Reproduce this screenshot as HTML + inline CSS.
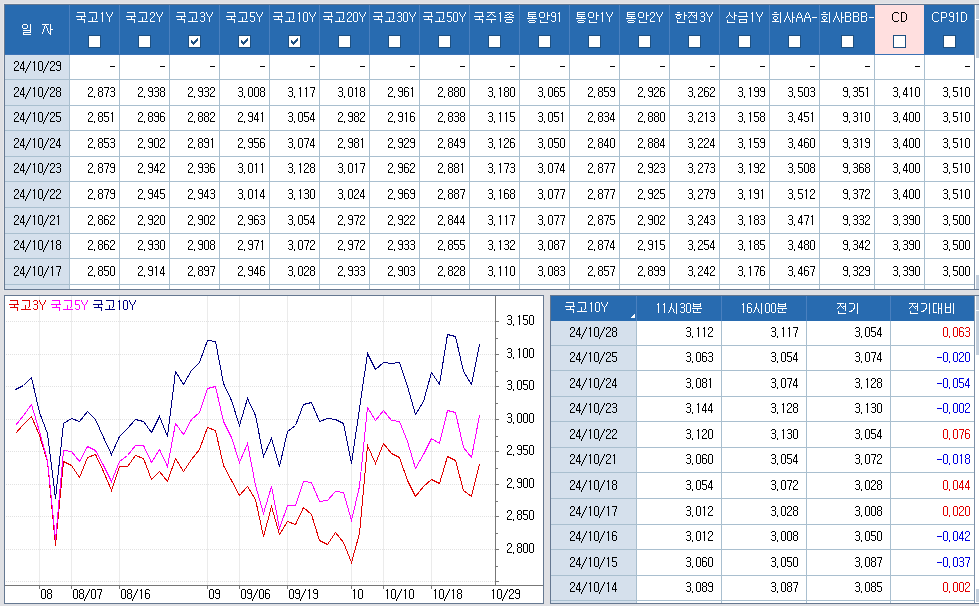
<!DOCTYPE html><html><head><meta charset="utf-8"><style>html,body{margin:0;padding:0;overflow:hidden;background:#dfe0e4}svg{display:block}</style></head><body><svg width="979" height="606" viewBox="0 0 979 606" shape-rendering="crispEdges"><defs><path id="g0030" d="M1 0h3v1h-3zM0 1h1v1h-1zM4 1h1v1h-1zM0 2h1v1h-1zM4 2h1v1h-1zM0 3h1v1h-1zM4 3h1v1h-1zM0 4h1v1h-1zM4 4h1v1h-1zM0 5h1v1h-1zM4 5h1v1h-1zM0 6h1v1h-1zM4 6h1v1h-1zM0 7h1v1h-1zM4 7h1v1h-1zM0 8h1v1h-1zM4 8h1v1h-1zM1 9h3v1h-3z"/>
<path id="g0031" d="M2 0h1v1h-1zM1 1h2v1h-2zM2 2h1v1h-1zM2 3h1v1h-1zM2 4h1v1h-1zM2 5h1v1h-1zM2 6h1v1h-1zM2 7h1v1h-1zM2 8h1v1h-1zM2 9h1v1h-1z"/>
<path id="g0032" d="M1 0h3v1h-3zM0 1h1v1h-1zM4 1h1v1h-1zM0 2h1v1h-1zM4 2h1v1h-1zM4 3h1v1h-1zM3 4h1v1h-1zM2 5h1v1h-1zM1 6h1v1h-1zM0 7h1v1h-1zM0 8h1v1h-1zM0 9h5v1h-5z"/>
<path id="g0033" d="M1 0h3v1h-3zM0 1h1v1h-1zM4 1h1v1h-1zM4 2h1v1h-1zM4 3h1v1h-1zM1 4h3v1h-3zM4 5h1v1h-1zM4 6h1v1h-1zM4 7h1v1h-1zM0 8h1v1h-1zM4 8h1v1h-1zM1 9h3v1h-3z"/>
<path id="g0034" d="M3 0h1v1h-1zM2 1h2v1h-2zM2 2h2v1h-2zM1 3h1v1h-1zM3 3h1v1h-1zM1 4h1v1h-1zM3 4h1v1h-1zM0 5h1v1h-1zM3 5h1v1h-1zM0 6h1v1h-1zM3 6h1v1h-1zM0 7h5v1h-5zM3 8h1v1h-1zM3 9h1v1h-1z"/>
<path id="g0035" d="M0 0h5v1h-5zM0 1h1v1h-1zM0 2h1v1h-1zM0 3h1v1h-1zM0 4h4v1h-4zM4 5h1v1h-1zM4 6h1v1h-1zM4 7h1v1h-1zM0 8h1v1h-1zM4 8h1v1h-1zM1 9h3v1h-3z"/>
<path id="g0036" d="M1 0h3v1h-3zM0 1h1v1h-1zM4 1h1v1h-1zM0 2h1v1h-1zM0 3h1v1h-1zM0 4h4v1h-4zM0 5h1v1h-1zM4 5h1v1h-1zM0 6h1v1h-1zM4 6h1v1h-1zM0 7h1v1h-1zM4 7h1v1h-1zM0 8h1v1h-1zM4 8h1v1h-1zM1 9h3v1h-3z"/>
<path id="g0037" d="M0 0h5v1h-5zM4 1h1v1h-1zM4 2h1v1h-1zM3 3h1v1h-1zM3 4h1v1h-1zM3 5h1v1h-1zM2 6h1v1h-1zM2 7h1v1h-1zM2 8h1v1h-1zM2 9h1v1h-1z"/>
<path id="g0038" d="M1 0h3v1h-3zM0 1h1v1h-1zM4 1h1v1h-1zM0 2h1v1h-1zM4 2h1v1h-1zM0 3h1v1h-1zM4 3h1v1h-1zM1 4h3v1h-3zM0 5h1v1h-1zM4 5h1v1h-1zM0 6h1v1h-1zM4 6h1v1h-1zM0 7h1v1h-1zM4 7h1v1h-1zM0 8h1v1h-1zM4 8h1v1h-1zM1 9h3v1h-3z"/>
<path id="g0039" d="M1 0h3v1h-3zM0 1h1v1h-1zM4 1h1v1h-1zM0 2h1v1h-1zM4 2h1v1h-1zM0 3h1v1h-1zM4 3h1v1h-1zM1 4h4v1h-4zM4 5h1v1h-1zM4 6h1v1h-1zM4 7h1v1h-1zM0 8h1v1h-1zM4 8h1v1h-1zM1 9h3v1h-3z"/>
<path id="g002c" d="M0 9h1v1h-1zM0 10h1v1h-1z"/>
<path id="g002d" d="M0 5h5v1h-5z"/>
<path id="g002f" d="M4 0h1v1h-1zM4 1h1v1h-1zM3 2h1v1h-1zM3 3h1v1h-1zM2 4h1v1h-1zM2 5h1v1h-1zM1 6h1v1h-1zM1 7h1v1h-1zM0 8h1v1h-1zM0 9h1v1h-1zM-1 10h1v1h-1zM-1 11h1v1h-1z"/>
<path id="g0043" d="M2 0h4v1h-4zM1 1h1v1h-1zM6 1h1v1h-1zM0 2h1v1h-1zM0 3h1v1h-1zM0 4h1v1h-1zM0 5h1v1h-1zM0 6h1v1h-1zM0 7h1v1h-1zM1 8h1v1h-1zM6 8h1v1h-1zM2 9h4v1h-4z"/>
<path id="g0050" d="M0 0h5v1h-5zM0 1h1v1h-1zM5 1h1v1h-1zM0 2h1v1h-1zM5 2h1v1h-1zM0 3h1v1h-1zM5 3h1v1h-1zM0 4h1v1h-1zM5 4h1v1h-1zM0 5h5v1h-5zM0 6h1v1h-1zM0 7h1v1h-1zM0 8h1v1h-1zM0 9h1v1h-1z"/>
<path id="g0044" d="M0 0h4v1h-4zM0 1h1v1h-1zM4 1h1v1h-1zM0 2h1v1h-1zM5 2h1v1h-1zM0 3h1v1h-1zM5 3h1v1h-1zM0 4h1v1h-1zM5 4h1v1h-1zM0 5h1v1h-1zM5 5h1v1h-1zM0 6h1v1h-1zM5 6h1v1h-1zM0 7h1v1h-1zM5 7h1v1h-1zM0 8h1v1h-1zM4 8h1v1h-1zM0 9h4v1h-4z"/>
<path id="g0059" d="M0 0h1v1h-1zM6 0h1v1h-1zM0 1h1v1h-1zM6 1h1v1h-1zM1 2h1v1h-1zM5 2h1v1h-1zM1 3h1v1h-1zM5 3h1v1h-1zM2 4h1v1h-1zM4 4h1v1h-1zM3 5h1v1h-1zM3 6h1v1h-1zM3 7h1v1h-1zM3 8h1v1h-1zM3 9h1v1h-1z"/>
<path id="g0041" d="M3 0h1v1h-1zM2 1h1v1h-1zM4 1h1v1h-1zM2 2h1v1h-1zM4 2h1v1h-1zM1 3h1v1h-1zM5 3h1v1h-1zM1 4h1v1h-1zM5 4h1v1h-1zM1 5h5v1h-5zM0 6h1v1h-1zM6 6h1v1h-1zM0 7h1v1h-1zM6 7h1v1h-1zM0 8h1v1h-1zM6 8h1v1h-1zM0 9h1v1h-1zM6 9h1v1h-1z"/>
<path id="g0042" d="M0 0h5v1h-5zM0 1h1v1h-1zM5 1h1v1h-1zM0 2h1v1h-1zM5 2h1v1h-1zM0 3h1v1h-1zM5 3h1v1h-1zM0 4h5v1h-5zM0 5h1v1h-1zM5 5h1v1h-1zM0 6h1v1h-1zM5 6h1v1h-1zM0 7h1v1h-1zM5 7h1v1h-1zM0 8h1v1h-1zM5 8h1v1h-1zM0 9h5v1h-5z"/>
<path id="gc77c" d="M1 0h4v1h-4zM8 0h1v1h-1zM0 1h1v1h-1zM5 1h1v1h-1zM8 1h1v1h-1zM0 2h1v1h-1zM5 2h1v1h-1zM8 2h1v1h-1zM0 3h1v1h-1zM5 3h1v1h-1zM8 3h1v1h-1zM1 4h4v1h-4zM8 4h1v1h-1zM8 5h1v1h-1zM1 6h8v1h-8zM8 7h1v1h-1zM1 8h8v1h-8zM1 9h1v1h-1zM1 10h8v1h-8z"/>
<path id="gc790" d="M0 0h7v1h-7zM8 0h1v1h-1zM3 1h1v1h-1zM8 1h1v1h-1zM2 2h1v1h-1zM4 2h1v1h-1zM8 2h1v1h-1zM2 3h1v1h-1zM4 3h1v1h-1zM8 3h1v1h-1zM2 4h1v1h-1zM5 4h1v1h-1zM8 4h1v1h-1zM1 5h1v1h-1zM5 5h1v1h-1zM8 5h3v1h-3zM1 6h1v1h-1zM5 6h1v1h-1zM8 6h1v1h-1zM1 7h1v1h-1zM6 7h1v1h-1zM8 7h1v1h-1zM0 8h1v1h-1zM6 8h1v1h-1zM8 8h1v1h-1zM0 9h1v1h-1zM7 9h2v1h-2zM8 10h1v1h-1z"/>
<path id="gad6d" d="M1 0h8v1h-8zM8 1h1v1h-1zM8 2h1v1h-1zM8 3h1v1h-1zM0 4h10v1h-10zM5 5h1v1h-1zM5 6h1v1h-1zM1 7h8v1h-8zM8 8h1v1h-1zM8 9h1v1h-1zM8 10h1v1h-1z"/>
<path id="gace0" d="M1 0h8v1h-8zM8 1h1v1h-1zM8 2h1v1h-1zM8 3h1v1h-1zM8 4h1v1h-1zM4 5h1v1h-1zM8 5h1v1h-1zM4 6h1v1h-1zM8 6h1v1h-1zM4 7h1v1h-1zM7 7h1v1h-1zM4 8h1v1h-1zM0 9h10v1h-10z"/>
<path id="gc8fc" d="M1 0h8v1h-8zM5 1h1v1h-1zM4 2h1v1h-1zM6 2h1v1h-1zM3 3h1v1h-1zM7 3h1v1h-1zM1 4h2v1h-2zM8 4h2v1h-2zM0 7h10v1h-10zM5 8h1v1h-1zM5 9h1v1h-1zM5 10h1v1h-1z"/>
<path id="gc885" d="M1 0h8v1h-8zM5 1h1v1h-1zM3 2h2v1h-2zM6 2h2v1h-2zM1 3h2v1h-2zM8 3h2v1h-2zM5 4h1v1h-1zM0 5h10v1h-10zM2 7h6v1h-6zM1 8h1v1h-1zM8 8h1v1h-1zM1 9h1v1h-1zM8 9h1v1h-1zM2 10h6v1h-6z"/>
<path id="gd1b5" d="M1 0h8v1h-8zM1 1h1v1h-1zM1 2h8v1h-8zM1 3h1v1h-1zM1 4h8v1h-8zM5 5h1v1h-1zM0 6h10v1h-10zM2 8h6v1h-6zM1 9h1v1h-1zM8 9h1v1h-1zM2 10h6v1h-6z"/>
<path id="gc548" d="M1 0h4v1h-4zM8 0h1v1h-1zM0 1h1v1h-1zM5 1h1v1h-1zM8 1h1v1h-1zM0 2h1v1h-1zM5 2h1v1h-1zM8 2h1v1h-1zM0 3h1v1h-1zM5 3h1v1h-1zM8 3h3v1h-3zM0 4h1v1h-1zM5 4h1v1h-1zM8 4h1v1h-1zM1 5h4v1h-4zM8 5h1v1h-1zM8 6h1v1h-1zM8 7h1v1h-1zM1 8h1v1h-1zM1 9h1v1h-1zM1 10h8v1h-8z"/>
<path id="gd55c" d="M1 0h3v1h-3zM8 0h1v1h-1zM8 1h1v1h-1zM-1 2h7v1h-7zM8 2h1v1h-1zM1 3h3v1h-3zM8 3h3v1h-3zM0 4h1v1h-1zM4 4h1v1h-1zM8 4h1v1h-1zM0 5h1v1h-1zM4 5h1v1h-1zM8 5h1v1h-1zM1 6h3v1h-3zM8 6h1v1h-1zM8 7h1v1h-1zM1 8h1v1h-1zM1 9h1v1h-1zM1 10h8v1h-8z"/>
<path id="gc804" d="M0 0h7v1h-7zM8 0h1v1h-1zM3 1h1v1h-1zM8 1h1v1h-1zM3 2h1v1h-1zM8 2h1v1h-1zM2 3h1v1h-1zM4 3h1v1h-1zM6 3h3v1h-3zM1 4h1v1h-1zM5 4h1v1h-1zM8 4h1v1h-1zM0 5h1v1h-1zM6 5h1v1h-1zM8 5h1v1h-1zM8 6h1v1h-1zM8 7h1v1h-1zM1 8h1v1h-1zM1 9h1v1h-1zM1 10h8v1h-8z"/>
<path id="gc0b0" d="M3 0h1v1h-1zM8 0h1v1h-1zM3 1h1v1h-1zM8 1h1v1h-1zM3 2h1v1h-1zM8 2h1v1h-1zM2 3h1v1h-1zM4 3h1v1h-1zM8 3h3v1h-3zM1 4h1v1h-1zM5 4h1v1h-1zM8 4h1v1h-1zM0 5h1v1h-1zM6 5h1v1h-1zM8 5h1v1h-1zM8 6h1v1h-1zM8 7h1v1h-1zM1 8h1v1h-1zM1 9h1v1h-1zM1 10h8v1h-8z"/>
<path id="gae08" d="M1 0h8v1h-8zM8 1h1v1h-1zM8 2h1v1h-1zM8 3h1v1h-1zM0 4h10v1h-10zM1 7h8v1h-8zM1 8h1v1h-1zM8 8h1v1h-1zM1 9h1v1h-1zM8 9h1v1h-1zM1 10h8v1h-8z"/>
<path id="gd68c" d="M2 0h3v1h-3zM8 0h1v1h-1zM8 1h1v1h-1zM0 2h7v1h-7zM8 2h1v1h-1zM8 3h1v1h-1zM2 4h3v1h-3zM8 4h1v1h-1zM1 5h1v1h-1zM5 5h1v1h-1zM8 5h1v1h-1zM1 6h1v1h-1zM5 6h1v1h-1zM8 6h1v1h-1zM2 7h3v1h-3zM8 7h1v1h-1zM3 8h1v1h-1zM8 8h1v1h-1zM0 9h7v1h-7zM8 9h1v1h-1zM8 10h1v1h-1z"/>
<path id="gc0ac" d="M3 0h1v1h-1zM8 0h1v1h-1zM3 1h1v1h-1zM8 1h1v1h-1zM3 2h1v1h-1zM8 2h1v1h-1zM3 3h1v1h-1zM8 3h1v1h-1zM2 4h1v1h-1zM4 4h1v1h-1zM8 4h1v1h-1zM2 5h1v1h-1zM4 5h1v1h-1zM8 5h3v1h-3zM1 6h1v1h-1zM5 6h1v1h-1zM8 6h1v1h-1zM1 7h1v1h-1zM5 7h1v1h-1zM8 7h1v1h-1zM0 8h1v1h-1zM6 8h1v1h-1zM8 8h1v1h-1zM0 9h1v1h-1zM6 9h1v1h-1zM8 9h1v1h-1zM8 10h1v1h-1z"/>
<path id="gc2dc" d="M3 0h1v1h-1zM8 0h1v1h-1zM3 1h1v1h-1zM8 1h1v1h-1zM3 2h1v1h-1zM8 2h1v1h-1zM3 3h1v1h-1zM8 3h1v1h-1zM2 4h2v1h-2zM8 4h1v1h-1zM2 5h1v1h-1zM4 5h1v1h-1zM8 5h1v1h-1zM2 6h1v1h-1zM5 6h1v1h-1zM8 6h1v1h-1zM1 7h1v1h-1zM5 7h1v1h-1zM8 7h1v1h-1zM1 8h1v1h-1zM5 8h1v1h-1zM8 8h1v1h-1zM0 9h1v1h-1zM6 9h1v1h-1zM8 9h1v1h-1zM8 10h1v1h-1z"/>
<path id="gbd84" d="M1 0h1v1h-1zM8 0h1v1h-1zM1 1h8v1h-8zM1 2h1v1h-1zM8 2h1v1h-1zM1 3h8v1h-8zM0 5h10v1h-10zM5 6h1v1h-1zM1 7h1v1h-1zM5 7h1v1h-1zM1 8h1v1h-1zM1 9h8v1h-8z"/>
<path id="gae30" d="M0 0h5v1h-5zM8 0h1v1h-1zM5 1h1v1h-1zM8 1h1v1h-1zM5 2h1v1h-1zM8 2h1v1h-1zM5 3h1v1h-1zM8 3h1v1h-1zM5 4h1v1h-1zM8 4h1v1h-1zM4 5h2v1h-2zM8 5h1v1h-1zM4 6h1v1h-1zM8 6h1v1h-1zM2 7h2v1h-2zM8 7h1v1h-1zM0 8h3v1h-3zM8 8h1v1h-1zM8 9h1v1h-1zM8 10h1v1h-1z"/>
<path id="gb300" d="M0 0h4v1h-4zM5 0h1v1h-1zM8 0h1v1h-1zM0 1h1v1h-1zM5 1h1v1h-1zM8 1h1v1h-1zM0 2h1v1h-1zM5 2h1v1h-1zM8 2h1v1h-1zM0 3h1v1h-1zM5 3h1v1h-1zM8 3h1v1h-1zM0 4h1v1h-1zM5 4h1v1h-1zM8 4h1v1h-1zM0 5h1v1h-1zM5 5h4v1h-4zM0 6h1v1h-1zM5 6h1v1h-1zM8 6h1v1h-1zM0 7h1v1h-1zM5 7h1v1h-1zM8 7h1v1h-1zM0 8h1v1h-1zM5 8h1v1h-1zM8 8h1v1h-1zM0 9h4v1h-4zM5 9h1v1h-1zM8 9h1v1h-1zM5 10h1v1h-1zM8 10h1v1h-1z"/>
<path id="gbe44" d="M0 0h1v1h-1zM5 0h1v1h-1zM8 0h1v1h-1zM0 1h1v1h-1zM5 1h1v1h-1zM8 1h1v1h-1zM0 2h1v1h-1zM5 2h1v1h-1zM8 2h1v1h-1zM0 3h1v1h-1zM5 3h1v1h-1zM8 3h1v1h-1zM0 4h6v1h-6zM8 4h1v1h-1zM0 5h1v1h-1zM5 5h1v1h-1zM8 5h1v1h-1zM0 6h1v1h-1zM5 6h1v1h-1zM8 6h1v1h-1zM0 7h1v1h-1zM5 7h1v1h-1zM8 7h1v1h-1zM0 8h1v1h-1zM5 8h1v1h-1zM8 8h1v1h-1zM0 9h6v1h-6zM8 9h1v1h-1zM8 10h1v1h-1z"/></defs><rect x="0" y="0" width="979" height="606" fill="#dfe0e4"/>
<rect x="3" y="3" width="976" height="1" fill="#e6e7ea"/>
<rect x="3" y="3" width="1" height="288" fill="#e6e7ea"/>
<rect x="4" y="4" width="975" height="286" fill="#657891"/>
<rect x="5" y="5" width="974" height="284" fill="#ffffff"/>
<rect x="5" y="5" width="970" height="50" fill="#286bb0"/>
<rect x="875" y="5" width="49" height="50" fill="#ffdfdf"/>
<rect x="5" y="55" width="64" height="234" fill="#d5e0ec"/>
<rect x="69" y="5" width="1" height="50" fill="#4a80bf"/>
<rect x="119" y="5" width="1" height="50" fill="#4a80bf"/>
<rect x="169" y="5" width="1" height="50" fill="#4a80bf"/>
<rect x="219" y="5" width="1" height="50" fill="#4a80bf"/>
<rect x="269" y="5" width="1" height="50" fill="#4a80bf"/>
<rect x="319" y="5" width="1" height="50" fill="#4a80bf"/>
<rect x="369" y="5" width="1" height="50" fill="#4a80bf"/>
<rect x="419" y="5" width="1" height="50" fill="#4a80bf"/>
<rect x="469" y="5" width="1" height="50" fill="#4a80bf"/>
<rect x="519" y="5" width="1" height="50" fill="#4a80bf"/>
<rect x="569" y="5" width="1" height="50" fill="#4a80bf"/>
<rect x="619" y="5" width="1" height="50" fill="#4a80bf"/>
<rect x="669" y="5" width="1" height="50" fill="#4a80bf"/>
<rect x="719" y="5" width="1" height="50" fill="#4a80bf"/>
<rect x="769" y="5" width="1" height="50" fill="#4a80bf"/>
<rect x="819" y="5" width="1" height="50" fill="#4a80bf"/>
<rect x="874" y="5" width="1" height="50" fill="#286bb0"/>
<rect x="924" y="5" width="1" height="50" fill="#286bb0"/>
<rect x="974" y="5" width="1" height="50" fill="#4a80bf"/>
<rect x="69" y="55" width="1" height="234" fill="#a9bfcf"/>
<rect x="119" y="55" width="1" height="234" fill="#a9bfcf"/>
<rect x="169" y="55" width="1" height="234" fill="#a9bfcf"/>
<rect x="219" y="55" width="1" height="234" fill="#a9bfcf"/>
<rect x="269" y="55" width="1" height="234" fill="#a9bfcf"/>
<rect x="319" y="55" width="1" height="234" fill="#a9bfcf"/>
<rect x="369" y="55" width="1" height="234" fill="#a9bfcf"/>
<rect x="419" y="55" width="1" height="234" fill="#a9bfcf"/>
<rect x="469" y="55" width="1" height="234" fill="#a9bfcf"/>
<rect x="519" y="55" width="1" height="234" fill="#a9bfcf"/>
<rect x="569" y="55" width="1" height="234" fill="#a9bfcf"/>
<rect x="619" y="55" width="1" height="234" fill="#a9bfcf"/>
<rect x="669" y="55" width="1" height="234" fill="#a9bfcf"/>
<rect x="719" y="55" width="1" height="234" fill="#a9bfcf"/>
<rect x="769" y="55" width="1" height="234" fill="#a9bfcf"/>
<rect x="819" y="55" width="1" height="234" fill="#a9bfcf"/>
<rect x="874" y="55" width="1" height="234" fill="#a9bfcf"/>
<rect x="924" y="55" width="1" height="234" fill="#a9bfcf"/>
<rect x="974" y="55" width="1" height="234" fill="#a9bfcf"/>
<rect x="5" y="79" width="970" height="1" fill="#a9bfcf"/>
<rect x="5" y="105" width="970" height="1" fill="#a9bfcf"/>
<rect x="5" y="130" width="970" height="1" fill="#a9bfcf"/>
<rect x="5" y="156" width="970" height="1" fill="#a9bfcf"/>
<rect x="5" y="181" width="970" height="1" fill="#a9bfcf"/>
<rect x="5" y="207" width="970" height="1" fill="#a9bfcf"/>
<rect x="5" y="233" width="970" height="1" fill="#a9bfcf"/>
<rect x="5" y="258" width="970" height="1" fill="#a9bfcf"/>
<rect x="5" y="284" width="970" height="1" fill="#a9bfcf"/>
<rect x="974" y="5" width="1" height="284" fill="#7d90a8"/>
<rect x="975" y="5" width="4" height="284" fill="#fff"/>
<rect x="976" y="5" width="3" height="14" fill="#c3cfdd"/>
<rect x="976" y="20" width="3" height="38" fill="#c3cfdd"/>
<rect x="976" y="275" width="3" height="14" fill="#c3cfdd"/>
<rect x="875" y="5" width="49" height="49" fill="#ffdfdf"/>
<rect x="5" y="54" width="969" height="1" fill="#3a72b6"/>
<g fill="#fff"><use href="#gc77c" x="22" y="24"/></g>
<g fill="#fff"><use href="#gc790" x="42" y="24"/></g>
<g fill="#fff"><use href="#gad6d" x="76" y="12"/><use href="#gace0" x="88" y="12"/><use href="#g0031" x="100" y="12"/><use href="#g0059" x="106" y="12"/></g>
<rect x="88" y="35" width="13" height="13" fill="#1d4f80"/>
<rect x="89" y="36" width="11" height="11" fill="#fff"/>
<g fill="#fff"><use href="#gad6d" x="126" y="12"/><use href="#gace0" x="138" y="12"/><use href="#g0032" x="150" y="12"/><use href="#g0059" x="156" y="12"/></g>
<rect x="138" y="35" width="13" height="13" fill="#1d4f80"/>
<rect x="139" y="36" width="11" height="11" fill="#fff"/>
<g fill="#fff"><use href="#gad6d" x="176" y="12"/><use href="#gace0" x="188" y="12"/><use href="#g0033" x="200" y="12"/><use href="#g0059" x="206" y="12"/></g>
<rect x="188" y="35" width="13" height="13" fill="#1d4f80"/>
<rect x="189" y="36" width="11" height="11" fill="#fff"/>
<path d="M197 38h1v1h-1zM196 39h2v1h-2zM191 40h1v1h-1zM195 40h3v1h-3zM191 41h2v1h-2zM194 41h3v1h-3zM191 42h5v1h-5zM192 43h3v1h-3zM193 44h1v1h-1z" fill="#1d4f80"/>
<g fill="#fff"><use href="#gad6d" x="226" y="12"/><use href="#gace0" x="238" y="12"/><use href="#g0035" x="250" y="12"/><use href="#g0059" x="256" y="12"/></g>
<rect x="238" y="35" width="13" height="13" fill="#1d4f80"/>
<rect x="239" y="36" width="11" height="11" fill="#fff"/>
<path d="M247 38h1v1h-1zM246 39h2v1h-2zM241 40h1v1h-1zM245 40h3v1h-3zM241 41h2v1h-2zM244 41h3v1h-3zM241 42h5v1h-5zM242 43h3v1h-3zM243 44h1v1h-1z" fill="#1d4f80"/>
<g fill="#fff"><use href="#gad6d" x="273" y="12"/><use href="#gace0" x="285" y="12"/><use href="#g0031" x="297" y="12"/><use href="#g0030" x="303" y="12"/><use href="#g0059" x="309" y="12"/></g>
<rect x="288" y="35" width="13" height="13" fill="#1d4f80"/>
<rect x="289" y="36" width="11" height="11" fill="#fff"/>
<path d="M297 38h1v1h-1zM296 39h2v1h-2zM291 40h1v1h-1zM295 40h3v1h-3zM291 41h2v1h-2zM294 41h3v1h-3zM291 42h5v1h-5zM292 43h3v1h-3zM293 44h1v1h-1z" fill="#1d4f80"/>
<g fill="#fff"><use href="#gad6d" x="323" y="12"/><use href="#gace0" x="335" y="12"/><use href="#g0032" x="347" y="12"/><use href="#g0030" x="353" y="12"/><use href="#g0059" x="359" y="12"/></g>
<rect x="338" y="35" width="13" height="13" fill="#1d4f80"/>
<rect x="339" y="36" width="11" height="11" fill="#fff"/>
<g fill="#fff"><use href="#gad6d" x="373" y="12"/><use href="#gace0" x="385" y="12"/><use href="#g0033" x="397" y="12"/><use href="#g0030" x="403" y="12"/><use href="#g0059" x="409" y="12"/></g>
<rect x="388" y="35" width="13" height="13" fill="#1d4f80"/>
<rect x="389" y="36" width="11" height="11" fill="#fff"/>
<g fill="#fff"><use href="#gad6d" x="423" y="12"/><use href="#gace0" x="435" y="12"/><use href="#g0035" x="447" y="12"/><use href="#g0030" x="453" y="12"/><use href="#g0059" x="459" y="12"/></g>
<rect x="438" y="35" width="13" height="13" fill="#1d4f80"/>
<rect x="439" y="36" width="11" height="11" fill="#fff"/>
<g fill="#fff"><use href="#gad6d" x="474" y="12"/><use href="#gc8fc" x="486" y="12"/><use href="#g0031" x="498" y="12"/><use href="#gc885" x="504" y="12"/></g>
<rect x="488" y="35" width="13" height="13" fill="#1d4f80"/>
<rect x="489" y="36" width="11" height="11" fill="#fff"/>
<g fill="#fff"><use href="#gd1b5" x="527" y="12"/><use href="#gc548" x="539" y="12"/><use href="#g0039" x="551" y="12"/><use href="#g0031" x="557" y="12"/></g>
<rect x="538" y="35" width="13" height="13" fill="#1d4f80"/>
<rect x="539" y="36" width="11" height="11" fill="#fff"/>
<g fill="#fff"><use href="#gd1b5" x="576" y="12"/><use href="#gc548" x="588" y="12"/><use href="#g0031" x="600" y="12"/><use href="#g0059" x="606" y="12"/></g>
<rect x="588" y="35" width="13" height="13" fill="#1d4f80"/>
<rect x="589" y="36" width="11" height="11" fill="#fff"/>
<g fill="#fff"><use href="#gd1b5" x="626" y="12"/><use href="#gc548" x="638" y="12"/><use href="#g0032" x="650" y="12"/><use href="#g0059" x="656" y="12"/></g>
<rect x="638" y="35" width="13" height="13" fill="#1d4f80"/>
<rect x="639" y="36" width="11" height="11" fill="#fff"/>
<g fill="#fff"><use href="#gd55c" x="676" y="12"/><use href="#gc804" x="688" y="12"/><use href="#g0033" x="700" y="12"/><use href="#g0059" x="706" y="12"/></g>
<rect x="688" y="35" width="13" height="13" fill="#1d4f80"/>
<rect x="689" y="36" width="11" height="11" fill="#fff"/>
<g fill="#fff"><use href="#gc0b0" x="726" y="12"/><use href="#gae08" x="738" y="12"/><use href="#g0031" x="750" y="12"/><use href="#g0059" x="756" y="12"/></g>
<rect x="738" y="35" width="13" height="13" fill="#1d4f80"/>
<rect x="739" y="36" width="11" height="11" fill="#fff"/>
<g fill="#fff"><use href="#gd68c" x="772" y="12"/><use href="#gc0ac" x="784" y="12"/><use href="#g0041" x="796" y="12"/><use href="#g0041" x="804" y="12"/><use href="#g002d" x="812" y="12"/></g>
<rect x="788" y="35" width="13" height="13" fill="#1d4f80"/>
<rect x="789" y="36" width="11" height="11" fill="#fff"/>
<g fill="#fff"><use href="#gd68c" x="821" y="12"/><use href="#gc0ac" x="833" y="12"/><use href="#g0042" x="845" y="12"/><use href="#g0042" x="853" y="12"/><use href="#g0042" x="861" y="12"/><use href="#g002d" x="869" y="12"/></g>
<rect x="841" y="35" width="13" height="13" fill="#1d4f80"/>
<rect x="842" y="36" width="11" height="11" fill="#fff"/>
<g fill="#000"><use href="#g0043" x="892" y="12"/><use href="#g0044" x="901" y="12"/></g>
<rect x="893" y="35" width="13" height="13" fill="#1d4f80"/>
<rect x="894" y="36" width="11" height="11" fill="#fff"/>
<g fill="#fff"><use href="#g0043" x="932" y="12"/><use href="#g0050" x="941" y="12"/><use href="#g0039" x="949" y="12"/><use href="#g0031" x="955" y="12"/><use href="#g0044" x="961" y="12"/></g>
<rect x="943" y="35" width="13" height="13" fill="#1d4f80"/>
<rect x="944" y="36" width="11" height="11" fill="#fff"/>
<g fill="#000"><use href="#g0032" x="14" y="61"/><use href="#g0034" x="20" y="61"/><use href="#g002f" x="26" y="61"/><use href="#g0031" x="32" y="61"/><use href="#g0030" x="38" y="61"/><use href="#g002f" x="44" y="61"/><use href="#g0032" x="50" y="61"/><use href="#g0039" x="56" y="61"/></g>
<g fill="#000"><use href="#g002d" x="110" y="61"/></g>
<g fill="#000"><use href="#g002d" x="160" y="61"/></g>
<g fill="#000"><use href="#g002d" x="210" y="61"/></g>
<g fill="#000"><use href="#g002d" x="260" y="61"/></g>
<g fill="#000"><use href="#g002d" x="310" y="61"/></g>
<g fill="#000"><use href="#g002d" x="360" y="61"/></g>
<g fill="#000"><use href="#g002d" x="410" y="61"/></g>
<g fill="#000"><use href="#g002d" x="460" y="61"/></g>
<g fill="#000"><use href="#g002d" x="510" y="61"/></g>
<g fill="#000"><use href="#g002d" x="560" y="61"/></g>
<g fill="#000"><use href="#g002d" x="610" y="61"/></g>
<g fill="#000"><use href="#g002d" x="660" y="61"/></g>
<g fill="#000"><use href="#g002d" x="710" y="61"/></g>
<g fill="#000"><use href="#g002d" x="760" y="61"/></g>
<g fill="#000"><use href="#g002d" x="810" y="61"/></g>
<g fill="#000"><use href="#g002d" x="865" y="61"/></g>
<g fill="#000"><use href="#g002d" x="915" y="61"/></g>
<g fill="#000"><use href="#g002d" x="965" y="61"/></g>
<g fill="#000"><use href="#g0032" x="14" y="87"/><use href="#g0034" x="20" y="87"/><use href="#g002f" x="26" y="87"/><use href="#g0031" x="32" y="87"/><use href="#g0030" x="38" y="87"/><use href="#g002f" x="44" y="87"/><use href="#g0032" x="50" y="87"/><use href="#g0038" x="56" y="87"/></g>
<g fill="#000"><use href="#g0032" x="88" y="87"/><use href="#g002c" x="94" y="87"/><use href="#g0038" x="98" y="87"/><use href="#g0037" x="104" y="87"/><use href="#g0033" x="110" y="87"/></g>
<g fill="#000"><use href="#g0032" x="138" y="87"/><use href="#g002c" x="144" y="87"/><use href="#g0039" x="148" y="87"/><use href="#g0033" x="154" y="87"/><use href="#g0038" x="160" y="87"/></g>
<g fill="#000"><use href="#g0032" x="188" y="87"/><use href="#g002c" x="194" y="87"/><use href="#g0039" x="198" y="87"/><use href="#g0033" x="204" y="87"/><use href="#g0032" x="210" y="87"/></g>
<g fill="#000"><use href="#g0033" x="238" y="87"/><use href="#g002c" x="244" y="87"/><use href="#g0030" x="248" y="87"/><use href="#g0030" x="254" y="87"/><use href="#g0038" x="260" y="87"/></g>
<g fill="#000"><use href="#g0033" x="288" y="87"/><use href="#g002c" x="294" y="87"/><use href="#g0031" x="298" y="87"/><use href="#g0031" x="304" y="87"/><use href="#g0037" x="310" y="87"/></g>
<g fill="#000"><use href="#g0033" x="338" y="87"/><use href="#g002c" x="344" y="87"/><use href="#g0030" x="348" y="87"/><use href="#g0031" x="354" y="87"/><use href="#g0038" x="360" y="87"/></g>
<g fill="#000"><use href="#g0032" x="388" y="87"/><use href="#g002c" x="394" y="87"/><use href="#g0039" x="398" y="87"/><use href="#g0036" x="404" y="87"/><use href="#g0031" x="410" y="87"/></g>
<g fill="#000"><use href="#g0032" x="438" y="87"/><use href="#g002c" x="444" y="87"/><use href="#g0038" x="448" y="87"/><use href="#g0038" x="454" y="87"/><use href="#g0030" x="460" y="87"/></g>
<g fill="#000"><use href="#g0033" x="488" y="87"/><use href="#g002c" x="494" y="87"/><use href="#g0031" x="498" y="87"/><use href="#g0038" x="504" y="87"/><use href="#g0030" x="510" y="87"/></g>
<g fill="#000"><use href="#g0033" x="538" y="87"/><use href="#g002c" x="544" y="87"/><use href="#g0030" x="548" y="87"/><use href="#g0036" x="554" y="87"/><use href="#g0035" x="560" y="87"/></g>
<g fill="#000"><use href="#g0032" x="588" y="87"/><use href="#g002c" x="594" y="87"/><use href="#g0038" x="598" y="87"/><use href="#g0035" x="604" y="87"/><use href="#g0039" x="610" y="87"/></g>
<g fill="#000"><use href="#g0032" x="638" y="87"/><use href="#g002c" x="644" y="87"/><use href="#g0039" x="648" y="87"/><use href="#g0032" x="654" y="87"/><use href="#g0036" x="660" y="87"/></g>
<g fill="#000"><use href="#g0033" x="688" y="87"/><use href="#g002c" x="694" y="87"/><use href="#g0032" x="698" y="87"/><use href="#g0036" x="704" y="87"/><use href="#g0032" x="710" y="87"/></g>
<g fill="#000"><use href="#g0033" x="738" y="87"/><use href="#g002c" x="744" y="87"/><use href="#g0031" x="748" y="87"/><use href="#g0039" x="754" y="87"/><use href="#g0039" x="760" y="87"/></g>
<g fill="#000"><use href="#g0033" x="788" y="87"/><use href="#g002c" x="794" y="87"/><use href="#g0035" x="798" y="87"/><use href="#g0030" x="804" y="87"/><use href="#g0033" x="810" y="87"/></g>
<g fill="#000"><use href="#g0039" x="843" y="87"/><use href="#g002c" x="849" y="87"/><use href="#g0033" x="853" y="87"/><use href="#g0035" x="859" y="87"/><use href="#g0031" x="865" y="87"/></g>
<g fill="#000"><use href="#g0033" x="893" y="87"/><use href="#g002c" x="899" y="87"/><use href="#g0034" x="903" y="87"/><use href="#g0031" x="909" y="87"/><use href="#g0030" x="915" y="87"/></g>
<g fill="#000"><use href="#g0033" x="943" y="87"/><use href="#g002c" x="949" y="87"/><use href="#g0035" x="953" y="87"/><use href="#g0031" x="959" y="87"/><use href="#g0030" x="965" y="87"/></g>
<g fill="#000"><use href="#g0032" x="14" y="112"/><use href="#g0034" x="20" y="112"/><use href="#g002f" x="26" y="112"/><use href="#g0031" x="32" y="112"/><use href="#g0030" x="38" y="112"/><use href="#g002f" x="44" y="112"/><use href="#g0032" x="50" y="112"/><use href="#g0035" x="56" y="112"/></g>
<g fill="#000"><use href="#g0032" x="88" y="112"/><use href="#g002c" x="94" y="112"/><use href="#g0038" x="98" y="112"/><use href="#g0035" x="104" y="112"/><use href="#g0031" x="110" y="112"/></g>
<g fill="#000"><use href="#g0032" x="138" y="112"/><use href="#g002c" x="144" y="112"/><use href="#g0038" x="148" y="112"/><use href="#g0039" x="154" y="112"/><use href="#g0036" x="160" y="112"/></g>
<g fill="#000"><use href="#g0032" x="188" y="112"/><use href="#g002c" x="194" y="112"/><use href="#g0038" x="198" y="112"/><use href="#g0038" x="204" y="112"/><use href="#g0032" x="210" y="112"/></g>
<g fill="#000"><use href="#g0032" x="238" y="112"/><use href="#g002c" x="244" y="112"/><use href="#g0039" x="248" y="112"/><use href="#g0034" x="254" y="112"/><use href="#g0031" x="260" y="112"/></g>
<g fill="#000"><use href="#g0033" x="288" y="112"/><use href="#g002c" x="294" y="112"/><use href="#g0030" x="298" y="112"/><use href="#g0035" x="304" y="112"/><use href="#g0034" x="310" y="112"/></g>
<g fill="#000"><use href="#g0032" x="338" y="112"/><use href="#g002c" x="344" y="112"/><use href="#g0039" x="348" y="112"/><use href="#g0038" x="354" y="112"/><use href="#g0032" x="360" y="112"/></g>
<g fill="#000"><use href="#g0032" x="388" y="112"/><use href="#g002c" x="394" y="112"/><use href="#g0039" x="398" y="112"/><use href="#g0031" x="404" y="112"/><use href="#g0036" x="410" y="112"/></g>
<g fill="#000"><use href="#g0032" x="438" y="112"/><use href="#g002c" x="444" y="112"/><use href="#g0038" x="448" y="112"/><use href="#g0033" x="454" y="112"/><use href="#g0038" x="460" y="112"/></g>
<g fill="#000"><use href="#g0033" x="488" y="112"/><use href="#g002c" x="494" y="112"/><use href="#g0031" x="498" y="112"/><use href="#g0031" x="504" y="112"/><use href="#g0035" x="510" y="112"/></g>
<g fill="#000"><use href="#g0033" x="538" y="112"/><use href="#g002c" x="544" y="112"/><use href="#g0030" x="548" y="112"/><use href="#g0035" x="554" y="112"/><use href="#g0031" x="560" y="112"/></g>
<g fill="#000"><use href="#g0032" x="588" y="112"/><use href="#g002c" x="594" y="112"/><use href="#g0038" x="598" y="112"/><use href="#g0033" x="604" y="112"/><use href="#g0034" x="610" y="112"/></g>
<g fill="#000"><use href="#g0032" x="638" y="112"/><use href="#g002c" x="644" y="112"/><use href="#g0038" x="648" y="112"/><use href="#g0038" x="654" y="112"/><use href="#g0030" x="660" y="112"/></g>
<g fill="#000"><use href="#g0033" x="688" y="112"/><use href="#g002c" x="694" y="112"/><use href="#g0032" x="698" y="112"/><use href="#g0031" x="704" y="112"/><use href="#g0033" x="710" y="112"/></g>
<g fill="#000"><use href="#g0033" x="738" y="112"/><use href="#g002c" x="744" y="112"/><use href="#g0031" x="748" y="112"/><use href="#g0035" x="754" y="112"/><use href="#g0038" x="760" y="112"/></g>
<g fill="#000"><use href="#g0033" x="788" y="112"/><use href="#g002c" x="794" y="112"/><use href="#g0034" x="798" y="112"/><use href="#g0035" x="804" y="112"/><use href="#g0031" x="810" y="112"/></g>
<g fill="#000"><use href="#g0039" x="843" y="112"/><use href="#g002c" x="849" y="112"/><use href="#g0033" x="853" y="112"/><use href="#g0031" x="859" y="112"/><use href="#g0030" x="865" y="112"/></g>
<g fill="#000"><use href="#g0033" x="893" y="112"/><use href="#g002c" x="899" y="112"/><use href="#g0034" x="903" y="112"/><use href="#g0030" x="909" y="112"/><use href="#g0030" x="915" y="112"/></g>
<g fill="#000"><use href="#g0033" x="943" y="112"/><use href="#g002c" x="949" y="112"/><use href="#g0035" x="953" y="112"/><use href="#g0031" x="959" y="112"/><use href="#g0030" x="965" y="112"/></g>
<g fill="#000"><use href="#g0032" x="14" y="138"/><use href="#g0034" x="20" y="138"/><use href="#g002f" x="26" y="138"/><use href="#g0031" x="32" y="138"/><use href="#g0030" x="38" y="138"/><use href="#g002f" x="44" y="138"/><use href="#g0032" x="50" y="138"/><use href="#g0034" x="56" y="138"/></g>
<g fill="#000"><use href="#g0032" x="88" y="138"/><use href="#g002c" x="94" y="138"/><use href="#g0038" x="98" y="138"/><use href="#g0035" x="104" y="138"/><use href="#g0033" x="110" y="138"/></g>
<g fill="#000"><use href="#g0032" x="138" y="138"/><use href="#g002c" x="144" y="138"/><use href="#g0039" x="148" y="138"/><use href="#g0030" x="154" y="138"/><use href="#g0032" x="160" y="138"/></g>
<g fill="#000"><use href="#g0032" x="188" y="138"/><use href="#g002c" x="194" y="138"/><use href="#g0038" x="198" y="138"/><use href="#g0039" x="204" y="138"/><use href="#g0031" x="210" y="138"/></g>
<g fill="#000"><use href="#g0032" x="238" y="138"/><use href="#g002c" x="244" y="138"/><use href="#g0039" x="248" y="138"/><use href="#g0035" x="254" y="138"/><use href="#g0036" x="260" y="138"/></g>
<g fill="#000"><use href="#g0033" x="288" y="138"/><use href="#g002c" x="294" y="138"/><use href="#g0030" x="298" y="138"/><use href="#g0037" x="304" y="138"/><use href="#g0034" x="310" y="138"/></g>
<g fill="#000"><use href="#g0032" x="338" y="138"/><use href="#g002c" x="344" y="138"/><use href="#g0039" x="348" y="138"/><use href="#g0038" x="354" y="138"/><use href="#g0031" x="360" y="138"/></g>
<g fill="#000"><use href="#g0032" x="388" y="138"/><use href="#g002c" x="394" y="138"/><use href="#g0039" x="398" y="138"/><use href="#g0032" x="404" y="138"/><use href="#g0039" x="410" y="138"/></g>
<g fill="#000"><use href="#g0032" x="438" y="138"/><use href="#g002c" x="444" y="138"/><use href="#g0038" x="448" y="138"/><use href="#g0034" x="454" y="138"/><use href="#g0039" x="460" y="138"/></g>
<g fill="#000"><use href="#g0033" x="488" y="138"/><use href="#g002c" x="494" y="138"/><use href="#g0031" x="498" y="138"/><use href="#g0032" x="504" y="138"/><use href="#g0036" x="510" y="138"/></g>
<g fill="#000"><use href="#g0033" x="538" y="138"/><use href="#g002c" x="544" y="138"/><use href="#g0030" x="548" y="138"/><use href="#g0035" x="554" y="138"/><use href="#g0030" x="560" y="138"/></g>
<g fill="#000"><use href="#g0032" x="588" y="138"/><use href="#g002c" x="594" y="138"/><use href="#g0038" x="598" y="138"/><use href="#g0034" x="604" y="138"/><use href="#g0030" x="610" y="138"/></g>
<g fill="#000"><use href="#g0032" x="638" y="138"/><use href="#g002c" x="644" y="138"/><use href="#g0038" x="648" y="138"/><use href="#g0038" x="654" y="138"/><use href="#g0034" x="660" y="138"/></g>
<g fill="#000"><use href="#g0033" x="688" y="138"/><use href="#g002c" x="694" y="138"/><use href="#g0032" x="698" y="138"/><use href="#g0032" x="704" y="138"/><use href="#g0034" x="710" y="138"/></g>
<g fill="#000"><use href="#g0033" x="738" y="138"/><use href="#g002c" x="744" y="138"/><use href="#g0031" x="748" y="138"/><use href="#g0035" x="754" y="138"/><use href="#g0039" x="760" y="138"/></g>
<g fill="#000"><use href="#g0033" x="788" y="138"/><use href="#g002c" x="794" y="138"/><use href="#g0034" x="798" y="138"/><use href="#g0036" x="804" y="138"/><use href="#g0030" x="810" y="138"/></g>
<g fill="#000"><use href="#g0039" x="843" y="138"/><use href="#g002c" x="849" y="138"/><use href="#g0033" x="853" y="138"/><use href="#g0031" x="859" y="138"/><use href="#g0039" x="865" y="138"/></g>
<g fill="#000"><use href="#g0033" x="893" y="138"/><use href="#g002c" x="899" y="138"/><use href="#g0034" x="903" y="138"/><use href="#g0030" x="909" y="138"/><use href="#g0030" x="915" y="138"/></g>
<g fill="#000"><use href="#g0033" x="943" y="138"/><use href="#g002c" x="949" y="138"/><use href="#g0035" x="953" y="138"/><use href="#g0031" x="959" y="138"/><use href="#g0030" x="965" y="138"/></g>
<g fill="#000"><use href="#g0032" x="14" y="163"/><use href="#g0034" x="20" y="163"/><use href="#g002f" x="26" y="163"/><use href="#g0031" x="32" y="163"/><use href="#g0030" x="38" y="163"/><use href="#g002f" x="44" y="163"/><use href="#g0032" x="50" y="163"/><use href="#g0033" x="56" y="163"/></g>
<g fill="#000"><use href="#g0032" x="88" y="163"/><use href="#g002c" x="94" y="163"/><use href="#g0038" x="98" y="163"/><use href="#g0037" x="104" y="163"/><use href="#g0039" x="110" y="163"/></g>
<g fill="#000"><use href="#g0032" x="138" y="163"/><use href="#g002c" x="144" y="163"/><use href="#g0039" x="148" y="163"/><use href="#g0034" x="154" y="163"/><use href="#g0032" x="160" y="163"/></g>
<g fill="#000"><use href="#g0032" x="188" y="163"/><use href="#g002c" x="194" y="163"/><use href="#g0039" x="198" y="163"/><use href="#g0033" x="204" y="163"/><use href="#g0036" x="210" y="163"/></g>
<g fill="#000"><use href="#g0033" x="238" y="163"/><use href="#g002c" x="244" y="163"/><use href="#g0030" x="248" y="163"/><use href="#g0031" x="254" y="163"/><use href="#g0031" x="260" y="163"/></g>
<g fill="#000"><use href="#g0033" x="288" y="163"/><use href="#g002c" x="294" y="163"/><use href="#g0031" x="298" y="163"/><use href="#g0032" x="304" y="163"/><use href="#g0038" x="310" y="163"/></g>
<g fill="#000"><use href="#g0033" x="338" y="163"/><use href="#g002c" x="344" y="163"/><use href="#g0030" x="348" y="163"/><use href="#g0031" x="354" y="163"/><use href="#g0037" x="360" y="163"/></g>
<g fill="#000"><use href="#g0032" x="388" y="163"/><use href="#g002c" x="394" y="163"/><use href="#g0039" x="398" y="163"/><use href="#g0036" x="404" y="163"/><use href="#g0032" x="410" y="163"/></g>
<g fill="#000"><use href="#g0032" x="438" y="163"/><use href="#g002c" x="444" y="163"/><use href="#g0038" x="448" y="163"/><use href="#g0038" x="454" y="163"/><use href="#g0031" x="460" y="163"/></g>
<g fill="#000"><use href="#g0033" x="488" y="163"/><use href="#g002c" x="494" y="163"/><use href="#g0031" x="498" y="163"/><use href="#g0037" x="504" y="163"/><use href="#g0033" x="510" y="163"/></g>
<g fill="#000"><use href="#g0033" x="538" y="163"/><use href="#g002c" x="544" y="163"/><use href="#g0030" x="548" y="163"/><use href="#g0037" x="554" y="163"/><use href="#g0034" x="560" y="163"/></g>
<g fill="#000"><use href="#g0032" x="588" y="163"/><use href="#g002c" x="594" y="163"/><use href="#g0038" x="598" y="163"/><use href="#g0037" x="604" y="163"/><use href="#g0037" x="610" y="163"/></g>
<g fill="#000"><use href="#g0032" x="638" y="163"/><use href="#g002c" x="644" y="163"/><use href="#g0039" x="648" y="163"/><use href="#g0032" x="654" y="163"/><use href="#g0033" x="660" y="163"/></g>
<g fill="#000"><use href="#g0033" x="688" y="163"/><use href="#g002c" x="694" y="163"/><use href="#g0032" x="698" y="163"/><use href="#g0037" x="704" y="163"/><use href="#g0033" x="710" y="163"/></g>
<g fill="#000"><use href="#g0033" x="738" y="163"/><use href="#g002c" x="744" y="163"/><use href="#g0031" x="748" y="163"/><use href="#g0039" x="754" y="163"/><use href="#g0032" x="760" y="163"/></g>
<g fill="#000"><use href="#g0033" x="788" y="163"/><use href="#g002c" x="794" y="163"/><use href="#g0035" x="798" y="163"/><use href="#g0030" x="804" y="163"/><use href="#g0038" x="810" y="163"/></g>
<g fill="#000"><use href="#g0039" x="843" y="163"/><use href="#g002c" x="849" y="163"/><use href="#g0033" x="853" y="163"/><use href="#g0036" x="859" y="163"/><use href="#g0038" x="865" y="163"/></g>
<g fill="#000"><use href="#g0033" x="893" y="163"/><use href="#g002c" x="899" y="163"/><use href="#g0034" x="903" y="163"/><use href="#g0030" x="909" y="163"/><use href="#g0030" x="915" y="163"/></g>
<g fill="#000"><use href="#g0033" x="943" y="163"/><use href="#g002c" x="949" y="163"/><use href="#g0035" x="953" y="163"/><use href="#g0031" x="959" y="163"/><use href="#g0030" x="965" y="163"/></g>
<g fill="#000"><use href="#g0032" x="14" y="189"/><use href="#g0034" x="20" y="189"/><use href="#g002f" x="26" y="189"/><use href="#g0031" x="32" y="189"/><use href="#g0030" x="38" y="189"/><use href="#g002f" x="44" y="189"/><use href="#g0032" x="50" y="189"/><use href="#g0032" x="56" y="189"/></g>
<g fill="#000"><use href="#g0032" x="88" y="189"/><use href="#g002c" x="94" y="189"/><use href="#g0038" x="98" y="189"/><use href="#g0037" x="104" y="189"/><use href="#g0039" x="110" y="189"/></g>
<g fill="#000"><use href="#g0032" x="138" y="189"/><use href="#g002c" x="144" y="189"/><use href="#g0039" x="148" y="189"/><use href="#g0034" x="154" y="189"/><use href="#g0035" x="160" y="189"/></g>
<g fill="#000"><use href="#g0032" x="188" y="189"/><use href="#g002c" x="194" y="189"/><use href="#g0039" x="198" y="189"/><use href="#g0034" x="204" y="189"/><use href="#g0033" x="210" y="189"/></g>
<g fill="#000"><use href="#g0033" x="238" y="189"/><use href="#g002c" x="244" y="189"/><use href="#g0030" x="248" y="189"/><use href="#g0031" x="254" y="189"/><use href="#g0034" x="260" y="189"/></g>
<g fill="#000"><use href="#g0033" x="288" y="189"/><use href="#g002c" x="294" y="189"/><use href="#g0031" x="298" y="189"/><use href="#g0033" x="304" y="189"/><use href="#g0030" x="310" y="189"/></g>
<g fill="#000"><use href="#g0033" x="338" y="189"/><use href="#g002c" x="344" y="189"/><use href="#g0030" x="348" y="189"/><use href="#g0032" x="354" y="189"/><use href="#g0034" x="360" y="189"/></g>
<g fill="#000"><use href="#g0032" x="388" y="189"/><use href="#g002c" x="394" y="189"/><use href="#g0039" x="398" y="189"/><use href="#g0036" x="404" y="189"/><use href="#g0039" x="410" y="189"/></g>
<g fill="#000"><use href="#g0032" x="438" y="189"/><use href="#g002c" x="444" y="189"/><use href="#g0038" x="448" y="189"/><use href="#g0038" x="454" y="189"/><use href="#g0037" x="460" y="189"/></g>
<g fill="#000"><use href="#g0033" x="488" y="189"/><use href="#g002c" x="494" y="189"/><use href="#g0031" x="498" y="189"/><use href="#g0036" x="504" y="189"/><use href="#g0038" x="510" y="189"/></g>
<g fill="#000"><use href="#g0033" x="538" y="189"/><use href="#g002c" x="544" y="189"/><use href="#g0030" x="548" y="189"/><use href="#g0037" x="554" y="189"/><use href="#g0037" x="560" y="189"/></g>
<g fill="#000"><use href="#g0032" x="588" y="189"/><use href="#g002c" x="594" y="189"/><use href="#g0038" x="598" y="189"/><use href="#g0037" x="604" y="189"/><use href="#g0037" x="610" y="189"/></g>
<g fill="#000"><use href="#g0032" x="638" y="189"/><use href="#g002c" x="644" y="189"/><use href="#g0039" x="648" y="189"/><use href="#g0032" x="654" y="189"/><use href="#g0035" x="660" y="189"/></g>
<g fill="#000"><use href="#g0033" x="688" y="189"/><use href="#g002c" x="694" y="189"/><use href="#g0032" x="698" y="189"/><use href="#g0037" x="704" y="189"/><use href="#g0039" x="710" y="189"/></g>
<g fill="#000"><use href="#g0033" x="738" y="189"/><use href="#g002c" x="744" y="189"/><use href="#g0031" x="748" y="189"/><use href="#g0039" x="754" y="189"/><use href="#g0031" x="760" y="189"/></g>
<g fill="#000"><use href="#g0033" x="788" y="189"/><use href="#g002c" x="794" y="189"/><use href="#g0035" x="798" y="189"/><use href="#g0031" x="804" y="189"/><use href="#g0032" x="810" y="189"/></g>
<g fill="#000"><use href="#g0039" x="843" y="189"/><use href="#g002c" x="849" y="189"/><use href="#g0033" x="853" y="189"/><use href="#g0037" x="859" y="189"/><use href="#g0032" x="865" y="189"/></g>
<g fill="#000"><use href="#g0033" x="893" y="189"/><use href="#g002c" x="899" y="189"/><use href="#g0034" x="903" y="189"/><use href="#g0030" x="909" y="189"/><use href="#g0030" x="915" y="189"/></g>
<g fill="#000"><use href="#g0033" x="943" y="189"/><use href="#g002c" x="949" y="189"/><use href="#g0035" x="953" y="189"/><use href="#g0031" x="959" y="189"/><use href="#g0030" x="965" y="189"/></g>
<g fill="#000"><use href="#g0032" x="14" y="215"/><use href="#g0034" x="20" y="215"/><use href="#g002f" x="26" y="215"/><use href="#g0031" x="32" y="215"/><use href="#g0030" x="38" y="215"/><use href="#g002f" x="44" y="215"/><use href="#g0032" x="50" y="215"/><use href="#g0031" x="56" y="215"/></g>
<g fill="#000"><use href="#g0032" x="88" y="215"/><use href="#g002c" x="94" y="215"/><use href="#g0038" x="98" y="215"/><use href="#g0036" x="104" y="215"/><use href="#g0032" x="110" y="215"/></g>
<g fill="#000"><use href="#g0032" x="138" y="215"/><use href="#g002c" x="144" y="215"/><use href="#g0039" x="148" y="215"/><use href="#g0032" x="154" y="215"/><use href="#g0030" x="160" y="215"/></g>
<g fill="#000"><use href="#g0032" x="188" y="215"/><use href="#g002c" x="194" y="215"/><use href="#g0039" x="198" y="215"/><use href="#g0030" x="204" y="215"/><use href="#g0032" x="210" y="215"/></g>
<g fill="#000"><use href="#g0032" x="238" y="215"/><use href="#g002c" x="244" y="215"/><use href="#g0039" x="248" y="215"/><use href="#g0036" x="254" y="215"/><use href="#g0033" x="260" y="215"/></g>
<g fill="#000"><use href="#g0033" x="288" y="215"/><use href="#g002c" x="294" y="215"/><use href="#g0030" x="298" y="215"/><use href="#g0035" x="304" y="215"/><use href="#g0034" x="310" y="215"/></g>
<g fill="#000"><use href="#g0032" x="338" y="215"/><use href="#g002c" x="344" y="215"/><use href="#g0039" x="348" y="215"/><use href="#g0037" x="354" y="215"/><use href="#g0032" x="360" y="215"/></g>
<g fill="#000"><use href="#g0032" x="388" y="215"/><use href="#g002c" x="394" y="215"/><use href="#g0039" x="398" y="215"/><use href="#g0032" x="404" y="215"/><use href="#g0032" x="410" y="215"/></g>
<g fill="#000"><use href="#g0032" x="438" y="215"/><use href="#g002c" x="444" y="215"/><use href="#g0038" x="448" y="215"/><use href="#g0034" x="454" y="215"/><use href="#g0034" x="460" y="215"/></g>
<g fill="#000"><use href="#g0033" x="488" y="215"/><use href="#g002c" x="494" y="215"/><use href="#g0031" x="498" y="215"/><use href="#g0031" x="504" y="215"/><use href="#g0037" x="510" y="215"/></g>
<g fill="#000"><use href="#g0033" x="538" y="215"/><use href="#g002c" x="544" y="215"/><use href="#g0030" x="548" y="215"/><use href="#g0037" x="554" y="215"/><use href="#g0037" x="560" y="215"/></g>
<g fill="#000"><use href="#g0032" x="588" y="215"/><use href="#g002c" x="594" y="215"/><use href="#g0038" x="598" y="215"/><use href="#g0037" x="604" y="215"/><use href="#g0035" x="610" y="215"/></g>
<g fill="#000"><use href="#g0032" x="638" y="215"/><use href="#g002c" x="644" y="215"/><use href="#g0039" x="648" y="215"/><use href="#g0030" x="654" y="215"/><use href="#g0032" x="660" y="215"/></g>
<g fill="#000"><use href="#g0033" x="688" y="215"/><use href="#g002c" x="694" y="215"/><use href="#g0032" x="698" y="215"/><use href="#g0034" x="704" y="215"/><use href="#g0033" x="710" y="215"/></g>
<g fill="#000"><use href="#g0033" x="738" y="215"/><use href="#g002c" x="744" y="215"/><use href="#g0031" x="748" y="215"/><use href="#g0038" x="754" y="215"/><use href="#g0033" x="760" y="215"/></g>
<g fill="#000"><use href="#g0033" x="788" y="215"/><use href="#g002c" x="794" y="215"/><use href="#g0034" x="798" y="215"/><use href="#g0037" x="804" y="215"/><use href="#g0031" x="810" y="215"/></g>
<g fill="#000"><use href="#g0039" x="843" y="215"/><use href="#g002c" x="849" y="215"/><use href="#g0033" x="853" y="215"/><use href="#g0033" x="859" y="215"/><use href="#g0032" x="865" y="215"/></g>
<g fill="#000"><use href="#g0033" x="893" y="215"/><use href="#g002c" x="899" y="215"/><use href="#g0033" x="903" y="215"/><use href="#g0039" x="909" y="215"/><use href="#g0030" x="915" y="215"/></g>
<g fill="#000"><use href="#g0033" x="943" y="215"/><use href="#g002c" x="949" y="215"/><use href="#g0035" x="953" y="215"/><use href="#g0030" x="959" y="215"/><use href="#g0030" x="965" y="215"/></g>
<g fill="#000"><use href="#g0032" x="14" y="240"/><use href="#g0034" x="20" y="240"/><use href="#g002f" x="26" y="240"/><use href="#g0031" x="32" y="240"/><use href="#g0030" x="38" y="240"/><use href="#g002f" x="44" y="240"/><use href="#g0031" x="50" y="240"/><use href="#g0038" x="56" y="240"/></g>
<g fill="#000"><use href="#g0032" x="88" y="240"/><use href="#g002c" x="94" y="240"/><use href="#g0038" x="98" y="240"/><use href="#g0036" x="104" y="240"/><use href="#g0032" x="110" y="240"/></g>
<g fill="#000"><use href="#g0032" x="138" y="240"/><use href="#g002c" x="144" y="240"/><use href="#g0039" x="148" y="240"/><use href="#g0033" x="154" y="240"/><use href="#g0030" x="160" y="240"/></g>
<g fill="#000"><use href="#g0032" x="188" y="240"/><use href="#g002c" x="194" y="240"/><use href="#g0039" x="198" y="240"/><use href="#g0030" x="204" y="240"/><use href="#g0038" x="210" y="240"/></g>
<g fill="#000"><use href="#g0032" x="238" y="240"/><use href="#g002c" x="244" y="240"/><use href="#g0039" x="248" y="240"/><use href="#g0037" x="254" y="240"/><use href="#g0031" x="260" y="240"/></g>
<g fill="#000"><use href="#g0033" x="288" y="240"/><use href="#g002c" x="294" y="240"/><use href="#g0030" x="298" y="240"/><use href="#g0037" x="304" y="240"/><use href="#g0032" x="310" y="240"/></g>
<g fill="#000"><use href="#g0032" x="338" y="240"/><use href="#g002c" x="344" y="240"/><use href="#g0039" x="348" y="240"/><use href="#g0037" x="354" y="240"/><use href="#g0032" x="360" y="240"/></g>
<g fill="#000"><use href="#g0032" x="388" y="240"/><use href="#g002c" x="394" y="240"/><use href="#g0039" x="398" y="240"/><use href="#g0033" x="404" y="240"/><use href="#g0033" x="410" y="240"/></g>
<g fill="#000"><use href="#g0032" x="438" y="240"/><use href="#g002c" x="444" y="240"/><use href="#g0038" x="448" y="240"/><use href="#g0035" x="454" y="240"/><use href="#g0035" x="460" y="240"/></g>
<g fill="#000"><use href="#g0033" x="488" y="240"/><use href="#g002c" x="494" y="240"/><use href="#g0031" x="498" y="240"/><use href="#g0033" x="504" y="240"/><use href="#g0032" x="510" y="240"/></g>
<g fill="#000"><use href="#g0033" x="538" y="240"/><use href="#g002c" x="544" y="240"/><use href="#g0030" x="548" y="240"/><use href="#g0038" x="554" y="240"/><use href="#g0037" x="560" y="240"/></g>
<g fill="#000"><use href="#g0032" x="588" y="240"/><use href="#g002c" x="594" y="240"/><use href="#g0038" x="598" y="240"/><use href="#g0037" x="604" y="240"/><use href="#g0034" x="610" y="240"/></g>
<g fill="#000"><use href="#g0032" x="638" y="240"/><use href="#g002c" x="644" y="240"/><use href="#g0039" x="648" y="240"/><use href="#g0031" x="654" y="240"/><use href="#g0035" x="660" y="240"/></g>
<g fill="#000"><use href="#g0033" x="688" y="240"/><use href="#g002c" x="694" y="240"/><use href="#g0032" x="698" y="240"/><use href="#g0035" x="704" y="240"/><use href="#g0034" x="710" y="240"/></g>
<g fill="#000"><use href="#g0033" x="738" y="240"/><use href="#g002c" x="744" y="240"/><use href="#g0031" x="748" y="240"/><use href="#g0038" x="754" y="240"/><use href="#g0035" x="760" y="240"/></g>
<g fill="#000"><use href="#g0033" x="788" y="240"/><use href="#g002c" x="794" y="240"/><use href="#g0034" x="798" y="240"/><use href="#g0038" x="804" y="240"/><use href="#g0030" x="810" y="240"/></g>
<g fill="#000"><use href="#g0039" x="843" y="240"/><use href="#g002c" x="849" y="240"/><use href="#g0033" x="853" y="240"/><use href="#g0034" x="859" y="240"/><use href="#g0032" x="865" y="240"/></g>
<g fill="#000"><use href="#g0033" x="893" y="240"/><use href="#g002c" x="899" y="240"/><use href="#g0033" x="903" y="240"/><use href="#g0039" x="909" y="240"/><use href="#g0030" x="915" y="240"/></g>
<g fill="#000"><use href="#g0033" x="943" y="240"/><use href="#g002c" x="949" y="240"/><use href="#g0035" x="953" y="240"/><use href="#g0030" x="959" y="240"/><use href="#g0030" x="965" y="240"/></g>
<g fill="#000"><use href="#g0032" x="14" y="266"/><use href="#g0034" x="20" y="266"/><use href="#g002f" x="26" y="266"/><use href="#g0031" x="32" y="266"/><use href="#g0030" x="38" y="266"/><use href="#g002f" x="44" y="266"/><use href="#g0031" x="50" y="266"/><use href="#g0037" x="56" y="266"/></g>
<g fill="#000"><use href="#g0032" x="88" y="266"/><use href="#g002c" x="94" y="266"/><use href="#g0038" x="98" y="266"/><use href="#g0035" x="104" y="266"/><use href="#g0030" x="110" y="266"/></g>
<g fill="#000"><use href="#g0032" x="138" y="266"/><use href="#g002c" x="144" y="266"/><use href="#g0039" x="148" y="266"/><use href="#g0031" x="154" y="266"/><use href="#g0034" x="160" y="266"/></g>
<g fill="#000"><use href="#g0032" x="188" y="266"/><use href="#g002c" x="194" y="266"/><use href="#g0038" x="198" y="266"/><use href="#g0039" x="204" y="266"/><use href="#g0037" x="210" y="266"/></g>
<g fill="#000"><use href="#g0032" x="238" y="266"/><use href="#g002c" x="244" y="266"/><use href="#g0039" x="248" y="266"/><use href="#g0034" x="254" y="266"/><use href="#g0036" x="260" y="266"/></g>
<g fill="#000"><use href="#g0033" x="288" y="266"/><use href="#g002c" x="294" y="266"/><use href="#g0030" x="298" y="266"/><use href="#g0032" x="304" y="266"/><use href="#g0038" x="310" y="266"/></g>
<g fill="#000"><use href="#g0032" x="338" y="266"/><use href="#g002c" x="344" y="266"/><use href="#g0039" x="348" y="266"/><use href="#g0033" x="354" y="266"/><use href="#g0033" x="360" y="266"/></g>
<g fill="#000"><use href="#g0032" x="388" y="266"/><use href="#g002c" x="394" y="266"/><use href="#g0039" x="398" y="266"/><use href="#g0030" x="404" y="266"/><use href="#g0033" x="410" y="266"/></g>
<g fill="#000"><use href="#g0032" x="438" y="266"/><use href="#g002c" x="444" y="266"/><use href="#g0038" x="448" y="266"/><use href="#g0032" x="454" y="266"/><use href="#g0038" x="460" y="266"/></g>
<g fill="#000"><use href="#g0033" x="488" y="266"/><use href="#g002c" x="494" y="266"/><use href="#g0031" x="498" y="266"/><use href="#g0031" x="504" y="266"/><use href="#g0030" x="510" y="266"/></g>
<g fill="#000"><use href="#g0033" x="538" y="266"/><use href="#g002c" x="544" y="266"/><use href="#g0030" x="548" y="266"/><use href="#g0038" x="554" y="266"/><use href="#g0033" x="560" y="266"/></g>
<g fill="#000"><use href="#g0032" x="588" y="266"/><use href="#g002c" x="594" y="266"/><use href="#g0038" x="598" y="266"/><use href="#g0035" x="604" y="266"/><use href="#g0037" x="610" y="266"/></g>
<g fill="#000"><use href="#g0032" x="638" y="266"/><use href="#g002c" x="644" y="266"/><use href="#g0038" x="648" y="266"/><use href="#g0039" x="654" y="266"/><use href="#g0039" x="660" y="266"/></g>
<g fill="#000"><use href="#g0033" x="688" y="266"/><use href="#g002c" x="694" y="266"/><use href="#g0032" x="698" y="266"/><use href="#g0034" x="704" y="266"/><use href="#g0032" x="710" y="266"/></g>
<g fill="#000"><use href="#g0033" x="738" y="266"/><use href="#g002c" x="744" y="266"/><use href="#g0031" x="748" y="266"/><use href="#g0037" x="754" y="266"/><use href="#g0036" x="760" y="266"/></g>
<g fill="#000"><use href="#g0033" x="788" y="266"/><use href="#g002c" x="794" y="266"/><use href="#g0034" x="798" y="266"/><use href="#g0036" x="804" y="266"/><use href="#g0037" x="810" y="266"/></g>
<g fill="#000"><use href="#g0039" x="843" y="266"/><use href="#g002c" x="849" y="266"/><use href="#g0033" x="853" y="266"/><use href="#g0032" x="859" y="266"/><use href="#g0039" x="865" y="266"/></g>
<g fill="#000"><use href="#g0033" x="893" y="266"/><use href="#g002c" x="899" y="266"/><use href="#g0033" x="903" y="266"/><use href="#g0039" x="909" y="266"/><use href="#g0030" x="915" y="266"/></g>
<g fill="#000"><use href="#g0033" x="943" y="266"/><use href="#g002c" x="949" y="266"/><use href="#g0035" x="953" y="266"/><use href="#g0030" x="959" y="266"/><use href="#g0030" x="965" y="266"/></g>
<rect x="4" y="295" width="540" height="309" fill="#657891"/>
<rect x="5" y="296" width="538" height="307" fill="#fff"/>
<rect x="39" y="296" width="1" height="289" fill="#ebebeb"/>
<rect x="71" y="296" width="1" height="289" fill="#ebebeb"/>
<rect x="119" y="296" width="1" height="289" fill="#ebebeb"/>
<rect x="207" y="296" width="1" height="289" fill="#ebebeb"/>
<rect x="239" y="296" width="1" height="289" fill="#ebebeb"/>
<rect x="287" y="296" width="1" height="289" fill="#ebebeb"/>
<rect x="351" y="296" width="1" height="289" fill="#ebebeb"/>
<rect x="383" y="296" width="1" height="289" fill="#ebebeb"/>
<rect x="431" y="296" width="1" height="289" fill="#ebebeb"/>
<path d="M6 321h1v1h-1zM8 321h1v1h-1zM10 321h1v1h-1zM12 321h1v1h-1zM14 321h1v1h-1zM16 321h1v1h-1zM18 321h1v1h-1zM20 321h1v1h-1zM22 321h1v1h-1zM24 321h1v1h-1zM26 321h1v1h-1zM28 321h1v1h-1zM30 321h1v1h-1zM32 321h1v1h-1zM34 321h1v1h-1zM36 321h1v1h-1zM38 321h1v1h-1zM40 321h1v1h-1zM42 321h1v1h-1zM44 321h1v1h-1zM46 321h1v1h-1zM48 321h1v1h-1zM50 321h1v1h-1zM52 321h1v1h-1zM54 321h1v1h-1zM56 321h1v1h-1zM58 321h1v1h-1zM60 321h1v1h-1zM62 321h1v1h-1zM64 321h1v1h-1zM66 321h1v1h-1zM68 321h1v1h-1zM70 321h1v1h-1zM72 321h1v1h-1zM74 321h1v1h-1zM76 321h1v1h-1zM78 321h1v1h-1zM80 321h1v1h-1zM82 321h1v1h-1zM84 321h1v1h-1zM86 321h1v1h-1zM88 321h1v1h-1zM90 321h1v1h-1zM92 321h1v1h-1zM94 321h1v1h-1zM96 321h1v1h-1zM98 321h1v1h-1zM100 321h1v1h-1zM102 321h1v1h-1zM104 321h1v1h-1zM106 321h1v1h-1zM108 321h1v1h-1zM110 321h1v1h-1zM112 321h1v1h-1zM114 321h1v1h-1zM116 321h1v1h-1zM118 321h1v1h-1zM120 321h1v1h-1zM122 321h1v1h-1zM124 321h1v1h-1zM126 321h1v1h-1zM128 321h1v1h-1zM130 321h1v1h-1zM132 321h1v1h-1zM134 321h1v1h-1zM136 321h1v1h-1zM138 321h1v1h-1zM140 321h1v1h-1zM142 321h1v1h-1zM144 321h1v1h-1zM146 321h1v1h-1zM148 321h1v1h-1zM150 321h1v1h-1zM152 321h1v1h-1zM154 321h1v1h-1zM156 321h1v1h-1zM158 321h1v1h-1zM160 321h1v1h-1zM162 321h1v1h-1zM164 321h1v1h-1zM166 321h1v1h-1zM168 321h1v1h-1zM170 321h1v1h-1zM172 321h1v1h-1zM174 321h1v1h-1zM176 321h1v1h-1zM178 321h1v1h-1zM180 321h1v1h-1zM182 321h1v1h-1zM184 321h1v1h-1zM186 321h1v1h-1zM188 321h1v1h-1zM190 321h1v1h-1zM192 321h1v1h-1zM194 321h1v1h-1zM196 321h1v1h-1zM198 321h1v1h-1zM200 321h1v1h-1zM202 321h1v1h-1zM204 321h1v1h-1zM206 321h1v1h-1zM208 321h1v1h-1zM210 321h1v1h-1zM212 321h1v1h-1zM214 321h1v1h-1zM216 321h1v1h-1zM218 321h1v1h-1zM220 321h1v1h-1zM222 321h1v1h-1zM224 321h1v1h-1zM226 321h1v1h-1zM228 321h1v1h-1zM230 321h1v1h-1zM232 321h1v1h-1zM234 321h1v1h-1zM236 321h1v1h-1zM238 321h1v1h-1zM240 321h1v1h-1zM242 321h1v1h-1zM244 321h1v1h-1zM246 321h1v1h-1zM248 321h1v1h-1zM250 321h1v1h-1zM252 321h1v1h-1zM254 321h1v1h-1zM256 321h1v1h-1zM258 321h1v1h-1zM260 321h1v1h-1zM262 321h1v1h-1zM264 321h1v1h-1zM266 321h1v1h-1zM268 321h1v1h-1zM270 321h1v1h-1zM272 321h1v1h-1zM274 321h1v1h-1zM276 321h1v1h-1zM278 321h1v1h-1zM280 321h1v1h-1zM282 321h1v1h-1zM284 321h1v1h-1zM286 321h1v1h-1zM288 321h1v1h-1zM290 321h1v1h-1zM292 321h1v1h-1zM294 321h1v1h-1zM296 321h1v1h-1zM298 321h1v1h-1zM300 321h1v1h-1zM302 321h1v1h-1zM304 321h1v1h-1zM306 321h1v1h-1zM308 321h1v1h-1zM310 321h1v1h-1zM312 321h1v1h-1zM314 321h1v1h-1zM316 321h1v1h-1zM318 321h1v1h-1zM320 321h1v1h-1zM322 321h1v1h-1zM324 321h1v1h-1zM326 321h1v1h-1zM328 321h1v1h-1zM330 321h1v1h-1zM332 321h1v1h-1zM334 321h1v1h-1zM336 321h1v1h-1zM338 321h1v1h-1zM340 321h1v1h-1zM342 321h1v1h-1zM344 321h1v1h-1zM346 321h1v1h-1zM348 321h1v1h-1zM350 321h1v1h-1zM352 321h1v1h-1zM354 321h1v1h-1zM356 321h1v1h-1zM358 321h1v1h-1zM360 321h1v1h-1zM362 321h1v1h-1zM364 321h1v1h-1zM366 321h1v1h-1zM368 321h1v1h-1zM370 321h1v1h-1zM372 321h1v1h-1zM374 321h1v1h-1zM376 321h1v1h-1zM378 321h1v1h-1zM380 321h1v1h-1zM382 321h1v1h-1zM384 321h1v1h-1zM386 321h1v1h-1zM388 321h1v1h-1zM390 321h1v1h-1zM392 321h1v1h-1zM394 321h1v1h-1zM396 321h1v1h-1zM398 321h1v1h-1zM400 321h1v1h-1zM402 321h1v1h-1zM404 321h1v1h-1zM406 321h1v1h-1zM408 321h1v1h-1zM410 321h1v1h-1zM412 321h1v1h-1zM414 321h1v1h-1zM416 321h1v1h-1zM418 321h1v1h-1zM420 321h1v1h-1zM422 321h1v1h-1zM424 321h1v1h-1zM426 321h1v1h-1zM428 321h1v1h-1zM430 321h1v1h-1zM432 321h1v1h-1zM434 321h1v1h-1zM436 321h1v1h-1zM438 321h1v1h-1zM440 321h1v1h-1zM442 321h1v1h-1zM444 321h1v1h-1zM446 321h1v1h-1zM448 321h1v1h-1zM450 321h1v1h-1zM452 321h1v1h-1zM454 321h1v1h-1zM456 321h1v1h-1zM458 321h1v1h-1zM460 321h1v1h-1zM462 321h1v1h-1zM464 321h1v1h-1zM466 321h1v1h-1zM468 321h1v1h-1zM470 321h1v1h-1zM472 321h1v1h-1zM474 321h1v1h-1zM476 321h1v1h-1zM478 321h1v1h-1zM480 321h1v1h-1zM482 321h1v1h-1zM484 321h1v1h-1zM486 321h1v1h-1zM488 321h1v1h-1zM490 321h1v1h-1zM492 321h1v1h-1zM494 321h1v1h-1zM6 354h1v1h-1zM8 354h1v1h-1zM10 354h1v1h-1zM12 354h1v1h-1zM14 354h1v1h-1zM16 354h1v1h-1zM18 354h1v1h-1zM20 354h1v1h-1zM22 354h1v1h-1zM24 354h1v1h-1zM26 354h1v1h-1zM28 354h1v1h-1zM30 354h1v1h-1zM32 354h1v1h-1zM34 354h1v1h-1zM36 354h1v1h-1zM38 354h1v1h-1zM40 354h1v1h-1zM42 354h1v1h-1zM44 354h1v1h-1zM46 354h1v1h-1zM48 354h1v1h-1zM50 354h1v1h-1zM52 354h1v1h-1zM54 354h1v1h-1zM56 354h1v1h-1zM58 354h1v1h-1zM60 354h1v1h-1zM62 354h1v1h-1zM64 354h1v1h-1zM66 354h1v1h-1zM68 354h1v1h-1zM70 354h1v1h-1zM72 354h1v1h-1zM74 354h1v1h-1zM76 354h1v1h-1zM78 354h1v1h-1zM80 354h1v1h-1zM82 354h1v1h-1zM84 354h1v1h-1zM86 354h1v1h-1zM88 354h1v1h-1zM90 354h1v1h-1zM92 354h1v1h-1zM94 354h1v1h-1zM96 354h1v1h-1zM98 354h1v1h-1zM100 354h1v1h-1zM102 354h1v1h-1zM104 354h1v1h-1zM106 354h1v1h-1zM108 354h1v1h-1zM110 354h1v1h-1zM112 354h1v1h-1zM114 354h1v1h-1zM116 354h1v1h-1zM118 354h1v1h-1zM120 354h1v1h-1zM122 354h1v1h-1zM124 354h1v1h-1zM126 354h1v1h-1zM128 354h1v1h-1zM130 354h1v1h-1zM132 354h1v1h-1zM134 354h1v1h-1zM136 354h1v1h-1zM138 354h1v1h-1zM140 354h1v1h-1zM142 354h1v1h-1zM144 354h1v1h-1zM146 354h1v1h-1zM148 354h1v1h-1zM150 354h1v1h-1zM152 354h1v1h-1zM154 354h1v1h-1zM156 354h1v1h-1zM158 354h1v1h-1zM160 354h1v1h-1zM162 354h1v1h-1zM164 354h1v1h-1zM166 354h1v1h-1zM168 354h1v1h-1zM170 354h1v1h-1zM172 354h1v1h-1zM174 354h1v1h-1zM176 354h1v1h-1zM178 354h1v1h-1zM180 354h1v1h-1zM182 354h1v1h-1zM184 354h1v1h-1zM186 354h1v1h-1zM188 354h1v1h-1zM190 354h1v1h-1zM192 354h1v1h-1zM194 354h1v1h-1zM196 354h1v1h-1zM198 354h1v1h-1zM200 354h1v1h-1zM202 354h1v1h-1zM204 354h1v1h-1zM206 354h1v1h-1zM208 354h1v1h-1zM210 354h1v1h-1zM212 354h1v1h-1zM214 354h1v1h-1zM216 354h1v1h-1zM218 354h1v1h-1zM220 354h1v1h-1zM222 354h1v1h-1zM224 354h1v1h-1zM226 354h1v1h-1zM228 354h1v1h-1zM230 354h1v1h-1zM232 354h1v1h-1zM234 354h1v1h-1zM236 354h1v1h-1zM238 354h1v1h-1zM240 354h1v1h-1zM242 354h1v1h-1zM244 354h1v1h-1zM246 354h1v1h-1zM248 354h1v1h-1zM250 354h1v1h-1zM252 354h1v1h-1zM254 354h1v1h-1zM256 354h1v1h-1zM258 354h1v1h-1zM260 354h1v1h-1zM262 354h1v1h-1zM264 354h1v1h-1zM266 354h1v1h-1zM268 354h1v1h-1zM270 354h1v1h-1zM272 354h1v1h-1zM274 354h1v1h-1zM276 354h1v1h-1zM278 354h1v1h-1zM280 354h1v1h-1zM282 354h1v1h-1zM284 354h1v1h-1zM286 354h1v1h-1zM288 354h1v1h-1zM290 354h1v1h-1zM292 354h1v1h-1zM294 354h1v1h-1zM296 354h1v1h-1zM298 354h1v1h-1zM300 354h1v1h-1zM302 354h1v1h-1zM304 354h1v1h-1zM306 354h1v1h-1zM308 354h1v1h-1zM310 354h1v1h-1zM312 354h1v1h-1zM314 354h1v1h-1zM316 354h1v1h-1zM318 354h1v1h-1zM320 354h1v1h-1zM322 354h1v1h-1zM324 354h1v1h-1zM326 354h1v1h-1zM328 354h1v1h-1zM330 354h1v1h-1zM332 354h1v1h-1zM334 354h1v1h-1zM336 354h1v1h-1zM338 354h1v1h-1zM340 354h1v1h-1zM342 354h1v1h-1zM344 354h1v1h-1zM346 354h1v1h-1zM348 354h1v1h-1zM350 354h1v1h-1zM352 354h1v1h-1zM354 354h1v1h-1zM356 354h1v1h-1zM358 354h1v1h-1zM360 354h1v1h-1zM362 354h1v1h-1zM364 354h1v1h-1zM366 354h1v1h-1zM368 354h1v1h-1zM370 354h1v1h-1zM372 354h1v1h-1zM374 354h1v1h-1zM376 354h1v1h-1zM378 354h1v1h-1zM380 354h1v1h-1zM382 354h1v1h-1zM384 354h1v1h-1zM386 354h1v1h-1zM388 354h1v1h-1zM390 354h1v1h-1zM392 354h1v1h-1zM394 354h1v1h-1zM396 354h1v1h-1zM398 354h1v1h-1zM400 354h1v1h-1zM402 354h1v1h-1zM404 354h1v1h-1zM406 354h1v1h-1zM408 354h1v1h-1zM410 354h1v1h-1zM412 354h1v1h-1zM414 354h1v1h-1zM416 354h1v1h-1zM418 354h1v1h-1zM420 354h1v1h-1zM422 354h1v1h-1zM424 354h1v1h-1zM426 354h1v1h-1zM428 354h1v1h-1zM430 354h1v1h-1zM432 354h1v1h-1zM434 354h1v1h-1zM436 354h1v1h-1zM438 354h1v1h-1zM440 354h1v1h-1zM442 354h1v1h-1zM444 354h1v1h-1zM446 354h1v1h-1zM448 354h1v1h-1zM450 354h1v1h-1zM452 354h1v1h-1zM454 354h1v1h-1zM456 354h1v1h-1zM458 354h1v1h-1zM460 354h1v1h-1zM462 354h1v1h-1zM464 354h1v1h-1zM466 354h1v1h-1zM468 354h1v1h-1zM470 354h1v1h-1zM472 354h1v1h-1zM474 354h1v1h-1zM476 354h1v1h-1zM478 354h1v1h-1zM480 354h1v1h-1zM482 354h1v1h-1zM484 354h1v1h-1zM486 354h1v1h-1zM488 354h1v1h-1zM490 354h1v1h-1zM492 354h1v1h-1zM494 354h1v1h-1zM6 386h1v1h-1zM8 386h1v1h-1zM10 386h1v1h-1zM12 386h1v1h-1zM14 386h1v1h-1zM16 386h1v1h-1zM18 386h1v1h-1zM20 386h1v1h-1zM22 386h1v1h-1zM24 386h1v1h-1zM26 386h1v1h-1zM28 386h1v1h-1zM30 386h1v1h-1zM32 386h1v1h-1zM34 386h1v1h-1zM36 386h1v1h-1zM38 386h1v1h-1zM40 386h1v1h-1zM42 386h1v1h-1zM44 386h1v1h-1zM46 386h1v1h-1zM48 386h1v1h-1zM50 386h1v1h-1zM52 386h1v1h-1zM54 386h1v1h-1zM56 386h1v1h-1zM58 386h1v1h-1zM60 386h1v1h-1zM62 386h1v1h-1zM64 386h1v1h-1zM66 386h1v1h-1zM68 386h1v1h-1zM70 386h1v1h-1zM72 386h1v1h-1zM74 386h1v1h-1zM76 386h1v1h-1zM78 386h1v1h-1zM80 386h1v1h-1zM82 386h1v1h-1zM84 386h1v1h-1zM86 386h1v1h-1zM88 386h1v1h-1zM90 386h1v1h-1zM92 386h1v1h-1zM94 386h1v1h-1zM96 386h1v1h-1zM98 386h1v1h-1zM100 386h1v1h-1zM102 386h1v1h-1zM104 386h1v1h-1zM106 386h1v1h-1zM108 386h1v1h-1zM110 386h1v1h-1zM112 386h1v1h-1zM114 386h1v1h-1zM116 386h1v1h-1zM118 386h1v1h-1zM120 386h1v1h-1zM122 386h1v1h-1zM124 386h1v1h-1zM126 386h1v1h-1zM128 386h1v1h-1zM130 386h1v1h-1zM132 386h1v1h-1zM134 386h1v1h-1zM136 386h1v1h-1zM138 386h1v1h-1zM140 386h1v1h-1zM142 386h1v1h-1zM144 386h1v1h-1zM146 386h1v1h-1zM148 386h1v1h-1zM150 386h1v1h-1zM152 386h1v1h-1zM154 386h1v1h-1zM156 386h1v1h-1zM158 386h1v1h-1zM160 386h1v1h-1zM162 386h1v1h-1zM164 386h1v1h-1zM166 386h1v1h-1zM168 386h1v1h-1zM170 386h1v1h-1zM172 386h1v1h-1zM174 386h1v1h-1zM176 386h1v1h-1zM178 386h1v1h-1zM180 386h1v1h-1zM182 386h1v1h-1zM184 386h1v1h-1zM186 386h1v1h-1zM188 386h1v1h-1zM190 386h1v1h-1zM192 386h1v1h-1zM194 386h1v1h-1zM196 386h1v1h-1zM198 386h1v1h-1zM200 386h1v1h-1zM202 386h1v1h-1zM204 386h1v1h-1zM206 386h1v1h-1zM208 386h1v1h-1zM210 386h1v1h-1zM212 386h1v1h-1zM214 386h1v1h-1zM216 386h1v1h-1zM218 386h1v1h-1zM220 386h1v1h-1zM222 386h1v1h-1zM224 386h1v1h-1zM226 386h1v1h-1zM228 386h1v1h-1zM230 386h1v1h-1zM232 386h1v1h-1zM234 386h1v1h-1zM236 386h1v1h-1zM238 386h1v1h-1zM240 386h1v1h-1zM242 386h1v1h-1zM244 386h1v1h-1zM246 386h1v1h-1zM248 386h1v1h-1zM250 386h1v1h-1zM252 386h1v1h-1zM254 386h1v1h-1zM256 386h1v1h-1zM258 386h1v1h-1zM260 386h1v1h-1zM262 386h1v1h-1zM264 386h1v1h-1zM266 386h1v1h-1zM268 386h1v1h-1zM270 386h1v1h-1zM272 386h1v1h-1zM274 386h1v1h-1zM276 386h1v1h-1zM278 386h1v1h-1zM280 386h1v1h-1zM282 386h1v1h-1zM284 386h1v1h-1zM286 386h1v1h-1zM288 386h1v1h-1zM290 386h1v1h-1zM292 386h1v1h-1zM294 386h1v1h-1zM296 386h1v1h-1zM298 386h1v1h-1zM300 386h1v1h-1zM302 386h1v1h-1zM304 386h1v1h-1zM306 386h1v1h-1zM308 386h1v1h-1zM310 386h1v1h-1zM312 386h1v1h-1zM314 386h1v1h-1zM316 386h1v1h-1zM318 386h1v1h-1zM320 386h1v1h-1zM322 386h1v1h-1zM324 386h1v1h-1zM326 386h1v1h-1zM328 386h1v1h-1zM330 386h1v1h-1zM332 386h1v1h-1zM334 386h1v1h-1zM336 386h1v1h-1zM338 386h1v1h-1zM340 386h1v1h-1zM342 386h1v1h-1zM344 386h1v1h-1zM346 386h1v1h-1zM348 386h1v1h-1zM350 386h1v1h-1zM352 386h1v1h-1zM354 386h1v1h-1zM356 386h1v1h-1zM358 386h1v1h-1zM360 386h1v1h-1zM362 386h1v1h-1zM364 386h1v1h-1zM366 386h1v1h-1zM368 386h1v1h-1zM370 386h1v1h-1zM372 386h1v1h-1zM374 386h1v1h-1zM376 386h1v1h-1zM378 386h1v1h-1zM380 386h1v1h-1zM382 386h1v1h-1zM384 386h1v1h-1zM386 386h1v1h-1zM388 386h1v1h-1zM390 386h1v1h-1zM392 386h1v1h-1zM394 386h1v1h-1zM396 386h1v1h-1zM398 386h1v1h-1zM400 386h1v1h-1zM402 386h1v1h-1zM404 386h1v1h-1zM406 386h1v1h-1zM408 386h1v1h-1zM410 386h1v1h-1zM412 386h1v1h-1zM414 386h1v1h-1zM416 386h1v1h-1zM418 386h1v1h-1zM420 386h1v1h-1zM422 386h1v1h-1zM424 386h1v1h-1zM426 386h1v1h-1zM428 386h1v1h-1zM430 386h1v1h-1zM432 386h1v1h-1zM434 386h1v1h-1zM436 386h1v1h-1zM438 386h1v1h-1zM440 386h1v1h-1zM442 386h1v1h-1zM444 386h1v1h-1zM446 386h1v1h-1zM448 386h1v1h-1zM450 386h1v1h-1zM452 386h1v1h-1zM454 386h1v1h-1zM456 386h1v1h-1zM458 386h1v1h-1zM460 386h1v1h-1zM462 386h1v1h-1zM464 386h1v1h-1zM466 386h1v1h-1zM468 386h1v1h-1zM470 386h1v1h-1zM472 386h1v1h-1zM474 386h1v1h-1zM476 386h1v1h-1zM478 386h1v1h-1zM480 386h1v1h-1zM482 386h1v1h-1zM484 386h1v1h-1zM486 386h1v1h-1zM488 386h1v1h-1zM490 386h1v1h-1zM492 386h1v1h-1zM494 386h1v1h-1zM6 419h1v1h-1zM8 419h1v1h-1zM10 419h1v1h-1zM12 419h1v1h-1zM14 419h1v1h-1zM16 419h1v1h-1zM18 419h1v1h-1zM20 419h1v1h-1zM22 419h1v1h-1zM24 419h1v1h-1zM26 419h1v1h-1zM28 419h1v1h-1zM30 419h1v1h-1zM32 419h1v1h-1zM34 419h1v1h-1zM36 419h1v1h-1zM38 419h1v1h-1zM40 419h1v1h-1zM42 419h1v1h-1zM44 419h1v1h-1zM46 419h1v1h-1zM48 419h1v1h-1zM50 419h1v1h-1zM52 419h1v1h-1zM54 419h1v1h-1zM56 419h1v1h-1zM58 419h1v1h-1zM60 419h1v1h-1zM62 419h1v1h-1zM64 419h1v1h-1zM66 419h1v1h-1zM68 419h1v1h-1zM70 419h1v1h-1zM72 419h1v1h-1zM74 419h1v1h-1zM76 419h1v1h-1zM78 419h1v1h-1zM80 419h1v1h-1zM82 419h1v1h-1zM84 419h1v1h-1zM86 419h1v1h-1zM88 419h1v1h-1zM90 419h1v1h-1zM92 419h1v1h-1zM94 419h1v1h-1zM96 419h1v1h-1zM98 419h1v1h-1zM100 419h1v1h-1zM102 419h1v1h-1zM104 419h1v1h-1zM106 419h1v1h-1zM108 419h1v1h-1zM110 419h1v1h-1zM112 419h1v1h-1zM114 419h1v1h-1zM116 419h1v1h-1zM118 419h1v1h-1zM120 419h1v1h-1zM122 419h1v1h-1zM124 419h1v1h-1zM126 419h1v1h-1zM128 419h1v1h-1zM130 419h1v1h-1zM132 419h1v1h-1zM134 419h1v1h-1zM136 419h1v1h-1zM138 419h1v1h-1zM140 419h1v1h-1zM142 419h1v1h-1zM144 419h1v1h-1zM146 419h1v1h-1zM148 419h1v1h-1zM150 419h1v1h-1zM152 419h1v1h-1zM154 419h1v1h-1zM156 419h1v1h-1zM158 419h1v1h-1zM160 419h1v1h-1zM162 419h1v1h-1zM164 419h1v1h-1zM166 419h1v1h-1zM168 419h1v1h-1zM170 419h1v1h-1zM172 419h1v1h-1zM174 419h1v1h-1zM176 419h1v1h-1zM178 419h1v1h-1zM180 419h1v1h-1zM182 419h1v1h-1zM184 419h1v1h-1zM186 419h1v1h-1zM188 419h1v1h-1zM190 419h1v1h-1zM192 419h1v1h-1zM194 419h1v1h-1zM196 419h1v1h-1zM198 419h1v1h-1zM200 419h1v1h-1zM202 419h1v1h-1zM204 419h1v1h-1zM206 419h1v1h-1zM208 419h1v1h-1zM210 419h1v1h-1zM212 419h1v1h-1zM214 419h1v1h-1zM216 419h1v1h-1zM218 419h1v1h-1zM220 419h1v1h-1zM222 419h1v1h-1zM224 419h1v1h-1zM226 419h1v1h-1zM228 419h1v1h-1zM230 419h1v1h-1zM232 419h1v1h-1zM234 419h1v1h-1zM236 419h1v1h-1zM238 419h1v1h-1zM240 419h1v1h-1zM242 419h1v1h-1zM244 419h1v1h-1zM246 419h1v1h-1zM248 419h1v1h-1zM250 419h1v1h-1zM252 419h1v1h-1zM254 419h1v1h-1zM256 419h1v1h-1zM258 419h1v1h-1zM260 419h1v1h-1zM262 419h1v1h-1zM264 419h1v1h-1zM266 419h1v1h-1zM268 419h1v1h-1zM270 419h1v1h-1zM272 419h1v1h-1zM274 419h1v1h-1zM276 419h1v1h-1zM278 419h1v1h-1zM280 419h1v1h-1zM282 419h1v1h-1zM284 419h1v1h-1zM286 419h1v1h-1zM288 419h1v1h-1zM290 419h1v1h-1zM292 419h1v1h-1zM294 419h1v1h-1zM296 419h1v1h-1zM298 419h1v1h-1zM300 419h1v1h-1zM302 419h1v1h-1zM304 419h1v1h-1zM306 419h1v1h-1zM308 419h1v1h-1zM310 419h1v1h-1zM312 419h1v1h-1zM314 419h1v1h-1zM316 419h1v1h-1zM318 419h1v1h-1zM320 419h1v1h-1zM322 419h1v1h-1zM324 419h1v1h-1zM326 419h1v1h-1zM328 419h1v1h-1zM330 419h1v1h-1zM332 419h1v1h-1zM334 419h1v1h-1zM336 419h1v1h-1zM338 419h1v1h-1zM340 419h1v1h-1zM342 419h1v1h-1zM344 419h1v1h-1zM346 419h1v1h-1zM348 419h1v1h-1zM350 419h1v1h-1zM352 419h1v1h-1zM354 419h1v1h-1zM356 419h1v1h-1zM358 419h1v1h-1zM360 419h1v1h-1zM362 419h1v1h-1zM364 419h1v1h-1zM366 419h1v1h-1zM368 419h1v1h-1zM370 419h1v1h-1zM372 419h1v1h-1zM374 419h1v1h-1zM376 419h1v1h-1zM378 419h1v1h-1zM380 419h1v1h-1zM382 419h1v1h-1zM384 419h1v1h-1zM386 419h1v1h-1zM388 419h1v1h-1zM390 419h1v1h-1zM392 419h1v1h-1zM394 419h1v1h-1zM396 419h1v1h-1zM398 419h1v1h-1zM400 419h1v1h-1zM402 419h1v1h-1zM404 419h1v1h-1zM406 419h1v1h-1zM408 419h1v1h-1zM410 419h1v1h-1zM412 419h1v1h-1zM414 419h1v1h-1zM416 419h1v1h-1zM418 419h1v1h-1zM420 419h1v1h-1zM422 419h1v1h-1zM424 419h1v1h-1zM426 419h1v1h-1zM428 419h1v1h-1zM430 419h1v1h-1zM432 419h1v1h-1zM434 419h1v1h-1zM436 419h1v1h-1zM438 419h1v1h-1zM440 419h1v1h-1zM442 419h1v1h-1zM444 419h1v1h-1zM446 419h1v1h-1zM448 419h1v1h-1zM450 419h1v1h-1zM452 419h1v1h-1zM454 419h1v1h-1zM456 419h1v1h-1zM458 419h1v1h-1zM460 419h1v1h-1zM462 419h1v1h-1zM464 419h1v1h-1zM466 419h1v1h-1zM468 419h1v1h-1zM470 419h1v1h-1zM472 419h1v1h-1zM474 419h1v1h-1zM476 419h1v1h-1zM478 419h1v1h-1zM480 419h1v1h-1zM482 419h1v1h-1zM484 419h1v1h-1zM486 419h1v1h-1zM488 419h1v1h-1zM490 419h1v1h-1zM492 419h1v1h-1zM494 419h1v1h-1zM6 451h1v1h-1zM8 451h1v1h-1zM10 451h1v1h-1zM12 451h1v1h-1zM14 451h1v1h-1zM16 451h1v1h-1zM18 451h1v1h-1zM20 451h1v1h-1zM22 451h1v1h-1zM24 451h1v1h-1zM26 451h1v1h-1zM28 451h1v1h-1zM30 451h1v1h-1zM32 451h1v1h-1zM34 451h1v1h-1zM36 451h1v1h-1zM38 451h1v1h-1zM40 451h1v1h-1zM42 451h1v1h-1zM44 451h1v1h-1zM46 451h1v1h-1zM48 451h1v1h-1zM50 451h1v1h-1zM52 451h1v1h-1zM54 451h1v1h-1zM56 451h1v1h-1zM58 451h1v1h-1zM60 451h1v1h-1zM62 451h1v1h-1zM64 451h1v1h-1zM66 451h1v1h-1zM68 451h1v1h-1zM70 451h1v1h-1zM72 451h1v1h-1zM74 451h1v1h-1zM76 451h1v1h-1zM78 451h1v1h-1zM80 451h1v1h-1zM82 451h1v1h-1zM84 451h1v1h-1zM86 451h1v1h-1zM88 451h1v1h-1zM90 451h1v1h-1zM92 451h1v1h-1zM94 451h1v1h-1zM96 451h1v1h-1zM98 451h1v1h-1zM100 451h1v1h-1zM102 451h1v1h-1zM104 451h1v1h-1zM106 451h1v1h-1zM108 451h1v1h-1zM110 451h1v1h-1zM112 451h1v1h-1zM114 451h1v1h-1zM116 451h1v1h-1zM118 451h1v1h-1zM120 451h1v1h-1zM122 451h1v1h-1zM124 451h1v1h-1zM126 451h1v1h-1zM128 451h1v1h-1zM130 451h1v1h-1zM132 451h1v1h-1zM134 451h1v1h-1zM136 451h1v1h-1zM138 451h1v1h-1zM140 451h1v1h-1zM142 451h1v1h-1zM144 451h1v1h-1zM146 451h1v1h-1zM148 451h1v1h-1zM150 451h1v1h-1zM152 451h1v1h-1zM154 451h1v1h-1zM156 451h1v1h-1zM158 451h1v1h-1zM160 451h1v1h-1zM162 451h1v1h-1zM164 451h1v1h-1zM166 451h1v1h-1zM168 451h1v1h-1zM170 451h1v1h-1zM172 451h1v1h-1zM174 451h1v1h-1zM176 451h1v1h-1zM178 451h1v1h-1zM180 451h1v1h-1zM182 451h1v1h-1zM184 451h1v1h-1zM186 451h1v1h-1zM188 451h1v1h-1zM190 451h1v1h-1zM192 451h1v1h-1zM194 451h1v1h-1zM196 451h1v1h-1zM198 451h1v1h-1zM200 451h1v1h-1zM202 451h1v1h-1zM204 451h1v1h-1zM206 451h1v1h-1zM208 451h1v1h-1zM210 451h1v1h-1zM212 451h1v1h-1zM214 451h1v1h-1zM216 451h1v1h-1zM218 451h1v1h-1zM220 451h1v1h-1zM222 451h1v1h-1zM224 451h1v1h-1zM226 451h1v1h-1zM228 451h1v1h-1zM230 451h1v1h-1zM232 451h1v1h-1zM234 451h1v1h-1zM236 451h1v1h-1zM238 451h1v1h-1zM240 451h1v1h-1zM242 451h1v1h-1zM244 451h1v1h-1zM246 451h1v1h-1zM248 451h1v1h-1zM250 451h1v1h-1zM252 451h1v1h-1zM254 451h1v1h-1zM256 451h1v1h-1zM258 451h1v1h-1zM260 451h1v1h-1zM262 451h1v1h-1zM264 451h1v1h-1zM266 451h1v1h-1zM268 451h1v1h-1zM270 451h1v1h-1zM272 451h1v1h-1zM274 451h1v1h-1zM276 451h1v1h-1zM278 451h1v1h-1zM280 451h1v1h-1zM282 451h1v1h-1zM284 451h1v1h-1zM286 451h1v1h-1zM288 451h1v1h-1zM290 451h1v1h-1zM292 451h1v1h-1zM294 451h1v1h-1zM296 451h1v1h-1zM298 451h1v1h-1zM300 451h1v1h-1zM302 451h1v1h-1zM304 451h1v1h-1zM306 451h1v1h-1zM308 451h1v1h-1zM310 451h1v1h-1zM312 451h1v1h-1zM314 451h1v1h-1zM316 451h1v1h-1zM318 451h1v1h-1zM320 451h1v1h-1zM322 451h1v1h-1zM324 451h1v1h-1zM326 451h1v1h-1zM328 451h1v1h-1zM330 451h1v1h-1zM332 451h1v1h-1zM334 451h1v1h-1zM336 451h1v1h-1zM338 451h1v1h-1zM340 451h1v1h-1zM342 451h1v1h-1zM344 451h1v1h-1zM346 451h1v1h-1zM348 451h1v1h-1zM350 451h1v1h-1zM352 451h1v1h-1zM354 451h1v1h-1zM356 451h1v1h-1zM358 451h1v1h-1zM360 451h1v1h-1zM362 451h1v1h-1zM364 451h1v1h-1zM366 451h1v1h-1zM368 451h1v1h-1zM370 451h1v1h-1zM372 451h1v1h-1zM374 451h1v1h-1zM376 451h1v1h-1zM378 451h1v1h-1zM380 451h1v1h-1zM382 451h1v1h-1zM384 451h1v1h-1zM386 451h1v1h-1zM388 451h1v1h-1zM390 451h1v1h-1zM392 451h1v1h-1zM394 451h1v1h-1zM396 451h1v1h-1zM398 451h1v1h-1zM400 451h1v1h-1zM402 451h1v1h-1zM404 451h1v1h-1zM406 451h1v1h-1zM408 451h1v1h-1zM410 451h1v1h-1zM412 451h1v1h-1zM414 451h1v1h-1zM416 451h1v1h-1zM418 451h1v1h-1zM420 451h1v1h-1zM422 451h1v1h-1zM424 451h1v1h-1zM426 451h1v1h-1zM428 451h1v1h-1zM430 451h1v1h-1zM432 451h1v1h-1zM434 451h1v1h-1zM436 451h1v1h-1zM438 451h1v1h-1zM440 451h1v1h-1zM442 451h1v1h-1zM444 451h1v1h-1zM446 451h1v1h-1zM448 451h1v1h-1zM450 451h1v1h-1zM452 451h1v1h-1zM454 451h1v1h-1zM456 451h1v1h-1zM458 451h1v1h-1zM460 451h1v1h-1zM462 451h1v1h-1zM464 451h1v1h-1zM466 451h1v1h-1zM468 451h1v1h-1zM470 451h1v1h-1zM472 451h1v1h-1zM474 451h1v1h-1zM476 451h1v1h-1zM478 451h1v1h-1zM480 451h1v1h-1zM482 451h1v1h-1zM484 451h1v1h-1zM486 451h1v1h-1zM488 451h1v1h-1zM490 451h1v1h-1zM492 451h1v1h-1zM494 451h1v1h-1zM6 484h1v1h-1zM8 484h1v1h-1zM10 484h1v1h-1zM12 484h1v1h-1zM14 484h1v1h-1zM16 484h1v1h-1zM18 484h1v1h-1zM20 484h1v1h-1zM22 484h1v1h-1zM24 484h1v1h-1zM26 484h1v1h-1zM28 484h1v1h-1zM30 484h1v1h-1zM32 484h1v1h-1zM34 484h1v1h-1zM36 484h1v1h-1zM38 484h1v1h-1zM40 484h1v1h-1zM42 484h1v1h-1zM44 484h1v1h-1zM46 484h1v1h-1zM48 484h1v1h-1zM50 484h1v1h-1zM52 484h1v1h-1zM54 484h1v1h-1zM56 484h1v1h-1zM58 484h1v1h-1zM60 484h1v1h-1zM62 484h1v1h-1zM64 484h1v1h-1zM66 484h1v1h-1zM68 484h1v1h-1zM70 484h1v1h-1zM72 484h1v1h-1zM74 484h1v1h-1zM76 484h1v1h-1zM78 484h1v1h-1zM80 484h1v1h-1zM82 484h1v1h-1zM84 484h1v1h-1zM86 484h1v1h-1zM88 484h1v1h-1zM90 484h1v1h-1zM92 484h1v1h-1zM94 484h1v1h-1zM96 484h1v1h-1zM98 484h1v1h-1zM100 484h1v1h-1zM102 484h1v1h-1zM104 484h1v1h-1zM106 484h1v1h-1zM108 484h1v1h-1zM110 484h1v1h-1zM112 484h1v1h-1zM114 484h1v1h-1zM116 484h1v1h-1zM118 484h1v1h-1zM120 484h1v1h-1zM122 484h1v1h-1zM124 484h1v1h-1zM126 484h1v1h-1zM128 484h1v1h-1zM130 484h1v1h-1zM132 484h1v1h-1zM134 484h1v1h-1zM136 484h1v1h-1zM138 484h1v1h-1zM140 484h1v1h-1zM142 484h1v1h-1zM144 484h1v1h-1zM146 484h1v1h-1zM148 484h1v1h-1zM150 484h1v1h-1zM152 484h1v1h-1zM154 484h1v1h-1zM156 484h1v1h-1zM158 484h1v1h-1zM160 484h1v1h-1zM162 484h1v1h-1zM164 484h1v1h-1zM166 484h1v1h-1zM168 484h1v1h-1zM170 484h1v1h-1zM172 484h1v1h-1zM174 484h1v1h-1zM176 484h1v1h-1zM178 484h1v1h-1zM180 484h1v1h-1zM182 484h1v1h-1zM184 484h1v1h-1zM186 484h1v1h-1zM188 484h1v1h-1zM190 484h1v1h-1zM192 484h1v1h-1zM194 484h1v1h-1zM196 484h1v1h-1zM198 484h1v1h-1zM200 484h1v1h-1zM202 484h1v1h-1zM204 484h1v1h-1zM206 484h1v1h-1zM208 484h1v1h-1zM210 484h1v1h-1zM212 484h1v1h-1zM214 484h1v1h-1zM216 484h1v1h-1zM218 484h1v1h-1zM220 484h1v1h-1zM222 484h1v1h-1zM224 484h1v1h-1zM226 484h1v1h-1zM228 484h1v1h-1zM230 484h1v1h-1zM232 484h1v1h-1zM234 484h1v1h-1zM236 484h1v1h-1zM238 484h1v1h-1zM240 484h1v1h-1zM242 484h1v1h-1zM244 484h1v1h-1zM246 484h1v1h-1zM248 484h1v1h-1zM250 484h1v1h-1zM252 484h1v1h-1zM254 484h1v1h-1zM256 484h1v1h-1zM258 484h1v1h-1zM260 484h1v1h-1zM262 484h1v1h-1zM264 484h1v1h-1zM266 484h1v1h-1zM268 484h1v1h-1zM270 484h1v1h-1zM272 484h1v1h-1zM274 484h1v1h-1zM276 484h1v1h-1zM278 484h1v1h-1zM280 484h1v1h-1zM282 484h1v1h-1zM284 484h1v1h-1zM286 484h1v1h-1zM288 484h1v1h-1zM290 484h1v1h-1zM292 484h1v1h-1zM294 484h1v1h-1zM296 484h1v1h-1zM298 484h1v1h-1zM300 484h1v1h-1zM302 484h1v1h-1zM304 484h1v1h-1zM306 484h1v1h-1zM308 484h1v1h-1zM310 484h1v1h-1zM312 484h1v1h-1zM314 484h1v1h-1zM316 484h1v1h-1zM318 484h1v1h-1zM320 484h1v1h-1zM322 484h1v1h-1zM324 484h1v1h-1zM326 484h1v1h-1zM328 484h1v1h-1zM330 484h1v1h-1zM332 484h1v1h-1zM334 484h1v1h-1zM336 484h1v1h-1zM338 484h1v1h-1zM340 484h1v1h-1zM342 484h1v1h-1zM344 484h1v1h-1zM346 484h1v1h-1zM348 484h1v1h-1zM350 484h1v1h-1zM352 484h1v1h-1zM354 484h1v1h-1zM356 484h1v1h-1zM358 484h1v1h-1zM360 484h1v1h-1zM362 484h1v1h-1zM364 484h1v1h-1zM366 484h1v1h-1zM368 484h1v1h-1zM370 484h1v1h-1zM372 484h1v1h-1zM374 484h1v1h-1zM376 484h1v1h-1zM378 484h1v1h-1zM380 484h1v1h-1zM382 484h1v1h-1zM384 484h1v1h-1zM386 484h1v1h-1zM388 484h1v1h-1zM390 484h1v1h-1zM392 484h1v1h-1zM394 484h1v1h-1zM396 484h1v1h-1zM398 484h1v1h-1zM400 484h1v1h-1zM402 484h1v1h-1zM404 484h1v1h-1zM406 484h1v1h-1zM408 484h1v1h-1zM410 484h1v1h-1zM412 484h1v1h-1zM414 484h1v1h-1zM416 484h1v1h-1zM418 484h1v1h-1zM420 484h1v1h-1zM422 484h1v1h-1zM424 484h1v1h-1zM426 484h1v1h-1zM428 484h1v1h-1zM430 484h1v1h-1zM432 484h1v1h-1zM434 484h1v1h-1zM436 484h1v1h-1zM438 484h1v1h-1zM440 484h1v1h-1zM442 484h1v1h-1zM444 484h1v1h-1zM446 484h1v1h-1zM448 484h1v1h-1zM450 484h1v1h-1zM452 484h1v1h-1zM454 484h1v1h-1zM456 484h1v1h-1zM458 484h1v1h-1zM460 484h1v1h-1zM462 484h1v1h-1zM464 484h1v1h-1zM466 484h1v1h-1zM468 484h1v1h-1zM470 484h1v1h-1zM472 484h1v1h-1zM474 484h1v1h-1zM476 484h1v1h-1zM478 484h1v1h-1zM480 484h1v1h-1zM482 484h1v1h-1zM484 484h1v1h-1zM486 484h1v1h-1zM488 484h1v1h-1zM490 484h1v1h-1zM492 484h1v1h-1zM494 484h1v1h-1zM6 516h1v1h-1zM8 516h1v1h-1zM10 516h1v1h-1zM12 516h1v1h-1zM14 516h1v1h-1zM16 516h1v1h-1zM18 516h1v1h-1zM20 516h1v1h-1zM22 516h1v1h-1zM24 516h1v1h-1zM26 516h1v1h-1zM28 516h1v1h-1zM30 516h1v1h-1zM32 516h1v1h-1zM34 516h1v1h-1zM36 516h1v1h-1zM38 516h1v1h-1zM40 516h1v1h-1zM42 516h1v1h-1zM44 516h1v1h-1zM46 516h1v1h-1zM48 516h1v1h-1zM50 516h1v1h-1zM52 516h1v1h-1zM54 516h1v1h-1zM56 516h1v1h-1zM58 516h1v1h-1zM60 516h1v1h-1zM62 516h1v1h-1zM64 516h1v1h-1zM66 516h1v1h-1zM68 516h1v1h-1zM70 516h1v1h-1zM72 516h1v1h-1zM74 516h1v1h-1zM76 516h1v1h-1zM78 516h1v1h-1zM80 516h1v1h-1zM82 516h1v1h-1zM84 516h1v1h-1zM86 516h1v1h-1zM88 516h1v1h-1zM90 516h1v1h-1zM92 516h1v1h-1zM94 516h1v1h-1zM96 516h1v1h-1zM98 516h1v1h-1zM100 516h1v1h-1zM102 516h1v1h-1zM104 516h1v1h-1zM106 516h1v1h-1zM108 516h1v1h-1zM110 516h1v1h-1zM112 516h1v1h-1zM114 516h1v1h-1zM116 516h1v1h-1zM118 516h1v1h-1zM120 516h1v1h-1zM122 516h1v1h-1zM124 516h1v1h-1zM126 516h1v1h-1zM128 516h1v1h-1zM130 516h1v1h-1zM132 516h1v1h-1zM134 516h1v1h-1zM136 516h1v1h-1zM138 516h1v1h-1zM140 516h1v1h-1zM142 516h1v1h-1zM144 516h1v1h-1zM146 516h1v1h-1zM148 516h1v1h-1zM150 516h1v1h-1zM152 516h1v1h-1zM154 516h1v1h-1zM156 516h1v1h-1zM158 516h1v1h-1zM160 516h1v1h-1zM162 516h1v1h-1zM164 516h1v1h-1zM166 516h1v1h-1zM168 516h1v1h-1zM170 516h1v1h-1zM172 516h1v1h-1zM174 516h1v1h-1zM176 516h1v1h-1zM178 516h1v1h-1zM180 516h1v1h-1zM182 516h1v1h-1zM184 516h1v1h-1zM186 516h1v1h-1zM188 516h1v1h-1zM190 516h1v1h-1zM192 516h1v1h-1zM194 516h1v1h-1zM196 516h1v1h-1zM198 516h1v1h-1zM200 516h1v1h-1zM202 516h1v1h-1zM204 516h1v1h-1zM206 516h1v1h-1zM208 516h1v1h-1zM210 516h1v1h-1zM212 516h1v1h-1zM214 516h1v1h-1zM216 516h1v1h-1zM218 516h1v1h-1zM220 516h1v1h-1zM222 516h1v1h-1zM224 516h1v1h-1zM226 516h1v1h-1zM228 516h1v1h-1zM230 516h1v1h-1zM232 516h1v1h-1zM234 516h1v1h-1zM236 516h1v1h-1zM238 516h1v1h-1zM240 516h1v1h-1zM242 516h1v1h-1zM244 516h1v1h-1zM246 516h1v1h-1zM248 516h1v1h-1zM250 516h1v1h-1zM252 516h1v1h-1zM254 516h1v1h-1zM256 516h1v1h-1zM258 516h1v1h-1zM260 516h1v1h-1zM262 516h1v1h-1zM264 516h1v1h-1zM266 516h1v1h-1zM268 516h1v1h-1zM270 516h1v1h-1zM272 516h1v1h-1zM274 516h1v1h-1zM276 516h1v1h-1zM278 516h1v1h-1zM280 516h1v1h-1zM282 516h1v1h-1zM284 516h1v1h-1zM286 516h1v1h-1zM288 516h1v1h-1zM290 516h1v1h-1zM292 516h1v1h-1zM294 516h1v1h-1zM296 516h1v1h-1zM298 516h1v1h-1zM300 516h1v1h-1zM302 516h1v1h-1zM304 516h1v1h-1zM306 516h1v1h-1zM308 516h1v1h-1zM310 516h1v1h-1zM312 516h1v1h-1zM314 516h1v1h-1zM316 516h1v1h-1zM318 516h1v1h-1zM320 516h1v1h-1zM322 516h1v1h-1zM324 516h1v1h-1zM326 516h1v1h-1zM328 516h1v1h-1zM330 516h1v1h-1zM332 516h1v1h-1zM334 516h1v1h-1zM336 516h1v1h-1zM338 516h1v1h-1zM340 516h1v1h-1zM342 516h1v1h-1zM344 516h1v1h-1zM346 516h1v1h-1zM348 516h1v1h-1zM350 516h1v1h-1zM352 516h1v1h-1zM354 516h1v1h-1zM356 516h1v1h-1zM358 516h1v1h-1zM360 516h1v1h-1zM362 516h1v1h-1zM364 516h1v1h-1zM366 516h1v1h-1zM368 516h1v1h-1zM370 516h1v1h-1zM372 516h1v1h-1zM374 516h1v1h-1zM376 516h1v1h-1zM378 516h1v1h-1zM380 516h1v1h-1zM382 516h1v1h-1zM384 516h1v1h-1zM386 516h1v1h-1zM388 516h1v1h-1zM390 516h1v1h-1zM392 516h1v1h-1zM394 516h1v1h-1zM396 516h1v1h-1zM398 516h1v1h-1zM400 516h1v1h-1zM402 516h1v1h-1zM404 516h1v1h-1zM406 516h1v1h-1zM408 516h1v1h-1zM410 516h1v1h-1zM412 516h1v1h-1zM414 516h1v1h-1zM416 516h1v1h-1zM418 516h1v1h-1zM420 516h1v1h-1zM422 516h1v1h-1zM424 516h1v1h-1zM426 516h1v1h-1zM428 516h1v1h-1zM430 516h1v1h-1zM432 516h1v1h-1zM434 516h1v1h-1zM436 516h1v1h-1zM438 516h1v1h-1zM440 516h1v1h-1zM442 516h1v1h-1zM444 516h1v1h-1zM446 516h1v1h-1zM448 516h1v1h-1zM450 516h1v1h-1zM452 516h1v1h-1zM454 516h1v1h-1zM456 516h1v1h-1zM458 516h1v1h-1zM460 516h1v1h-1zM462 516h1v1h-1zM464 516h1v1h-1zM466 516h1v1h-1zM468 516h1v1h-1zM470 516h1v1h-1zM472 516h1v1h-1zM474 516h1v1h-1zM476 516h1v1h-1zM478 516h1v1h-1zM480 516h1v1h-1zM482 516h1v1h-1zM484 516h1v1h-1zM486 516h1v1h-1zM488 516h1v1h-1zM490 516h1v1h-1zM492 516h1v1h-1zM494 516h1v1h-1zM6 549h1v1h-1zM8 549h1v1h-1zM10 549h1v1h-1zM12 549h1v1h-1zM14 549h1v1h-1zM16 549h1v1h-1zM18 549h1v1h-1zM20 549h1v1h-1zM22 549h1v1h-1zM24 549h1v1h-1zM26 549h1v1h-1zM28 549h1v1h-1zM30 549h1v1h-1zM32 549h1v1h-1zM34 549h1v1h-1zM36 549h1v1h-1zM38 549h1v1h-1zM40 549h1v1h-1zM42 549h1v1h-1zM44 549h1v1h-1zM46 549h1v1h-1zM48 549h1v1h-1zM50 549h1v1h-1zM52 549h1v1h-1zM54 549h1v1h-1zM56 549h1v1h-1zM58 549h1v1h-1zM60 549h1v1h-1zM62 549h1v1h-1zM64 549h1v1h-1zM66 549h1v1h-1zM68 549h1v1h-1zM70 549h1v1h-1zM72 549h1v1h-1zM74 549h1v1h-1zM76 549h1v1h-1zM78 549h1v1h-1zM80 549h1v1h-1zM82 549h1v1h-1zM84 549h1v1h-1zM86 549h1v1h-1zM88 549h1v1h-1zM90 549h1v1h-1zM92 549h1v1h-1zM94 549h1v1h-1zM96 549h1v1h-1zM98 549h1v1h-1zM100 549h1v1h-1zM102 549h1v1h-1zM104 549h1v1h-1zM106 549h1v1h-1zM108 549h1v1h-1zM110 549h1v1h-1zM112 549h1v1h-1zM114 549h1v1h-1zM116 549h1v1h-1zM118 549h1v1h-1zM120 549h1v1h-1zM122 549h1v1h-1zM124 549h1v1h-1zM126 549h1v1h-1zM128 549h1v1h-1zM130 549h1v1h-1zM132 549h1v1h-1zM134 549h1v1h-1zM136 549h1v1h-1zM138 549h1v1h-1zM140 549h1v1h-1zM142 549h1v1h-1zM144 549h1v1h-1zM146 549h1v1h-1zM148 549h1v1h-1zM150 549h1v1h-1zM152 549h1v1h-1zM154 549h1v1h-1zM156 549h1v1h-1zM158 549h1v1h-1zM160 549h1v1h-1zM162 549h1v1h-1zM164 549h1v1h-1zM166 549h1v1h-1zM168 549h1v1h-1zM170 549h1v1h-1zM172 549h1v1h-1zM174 549h1v1h-1zM176 549h1v1h-1zM178 549h1v1h-1zM180 549h1v1h-1zM182 549h1v1h-1zM184 549h1v1h-1zM186 549h1v1h-1zM188 549h1v1h-1zM190 549h1v1h-1zM192 549h1v1h-1zM194 549h1v1h-1zM196 549h1v1h-1zM198 549h1v1h-1zM200 549h1v1h-1zM202 549h1v1h-1zM204 549h1v1h-1zM206 549h1v1h-1zM208 549h1v1h-1zM210 549h1v1h-1zM212 549h1v1h-1zM214 549h1v1h-1zM216 549h1v1h-1zM218 549h1v1h-1zM220 549h1v1h-1zM222 549h1v1h-1zM224 549h1v1h-1zM226 549h1v1h-1zM228 549h1v1h-1zM230 549h1v1h-1zM232 549h1v1h-1zM234 549h1v1h-1zM236 549h1v1h-1zM238 549h1v1h-1zM240 549h1v1h-1zM242 549h1v1h-1zM244 549h1v1h-1zM246 549h1v1h-1zM248 549h1v1h-1zM250 549h1v1h-1zM252 549h1v1h-1zM254 549h1v1h-1zM256 549h1v1h-1zM258 549h1v1h-1zM260 549h1v1h-1zM262 549h1v1h-1zM264 549h1v1h-1zM266 549h1v1h-1zM268 549h1v1h-1zM270 549h1v1h-1zM272 549h1v1h-1zM274 549h1v1h-1zM276 549h1v1h-1zM278 549h1v1h-1zM280 549h1v1h-1zM282 549h1v1h-1zM284 549h1v1h-1zM286 549h1v1h-1zM288 549h1v1h-1zM290 549h1v1h-1zM292 549h1v1h-1zM294 549h1v1h-1zM296 549h1v1h-1zM298 549h1v1h-1zM300 549h1v1h-1zM302 549h1v1h-1zM304 549h1v1h-1zM306 549h1v1h-1zM308 549h1v1h-1zM310 549h1v1h-1zM312 549h1v1h-1zM314 549h1v1h-1zM316 549h1v1h-1zM318 549h1v1h-1zM320 549h1v1h-1zM322 549h1v1h-1zM324 549h1v1h-1zM326 549h1v1h-1zM328 549h1v1h-1zM330 549h1v1h-1zM332 549h1v1h-1zM334 549h1v1h-1zM336 549h1v1h-1zM338 549h1v1h-1zM340 549h1v1h-1zM342 549h1v1h-1zM344 549h1v1h-1zM346 549h1v1h-1zM348 549h1v1h-1zM350 549h1v1h-1zM352 549h1v1h-1zM354 549h1v1h-1zM356 549h1v1h-1zM358 549h1v1h-1zM360 549h1v1h-1zM362 549h1v1h-1zM364 549h1v1h-1zM366 549h1v1h-1zM368 549h1v1h-1zM370 549h1v1h-1zM372 549h1v1h-1zM374 549h1v1h-1zM376 549h1v1h-1zM378 549h1v1h-1zM380 549h1v1h-1zM382 549h1v1h-1zM384 549h1v1h-1zM386 549h1v1h-1zM388 549h1v1h-1zM390 549h1v1h-1zM392 549h1v1h-1zM394 549h1v1h-1zM396 549h1v1h-1zM398 549h1v1h-1zM400 549h1v1h-1zM402 549h1v1h-1zM404 549h1v1h-1zM406 549h1v1h-1zM408 549h1v1h-1zM410 549h1v1h-1zM412 549h1v1h-1zM414 549h1v1h-1zM416 549h1v1h-1zM418 549h1v1h-1zM420 549h1v1h-1zM422 549h1v1h-1zM424 549h1v1h-1zM426 549h1v1h-1zM428 549h1v1h-1zM430 549h1v1h-1zM432 549h1v1h-1zM434 549h1v1h-1zM436 549h1v1h-1zM438 549h1v1h-1zM440 549h1v1h-1zM442 549h1v1h-1zM444 549h1v1h-1zM446 549h1v1h-1zM448 549h1v1h-1zM450 549h1v1h-1zM452 549h1v1h-1zM454 549h1v1h-1zM456 549h1v1h-1zM458 549h1v1h-1zM460 549h1v1h-1zM462 549h1v1h-1zM464 549h1v1h-1zM466 549h1v1h-1zM468 549h1v1h-1zM470 549h1v1h-1zM472 549h1v1h-1zM474 549h1v1h-1zM476 549h1v1h-1zM478 549h1v1h-1zM480 549h1v1h-1zM482 549h1v1h-1zM484 549h1v1h-1zM486 549h1v1h-1zM488 549h1v1h-1zM490 549h1v1h-1zM492 549h1v1h-1zM494 549h1v1h-1zM6 581h1v1h-1zM8 581h1v1h-1zM10 581h1v1h-1zM12 581h1v1h-1zM14 581h1v1h-1zM16 581h1v1h-1zM18 581h1v1h-1zM20 581h1v1h-1zM22 581h1v1h-1zM24 581h1v1h-1zM26 581h1v1h-1zM28 581h1v1h-1zM30 581h1v1h-1zM32 581h1v1h-1zM34 581h1v1h-1zM36 581h1v1h-1zM38 581h1v1h-1zM40 581h1v1h-1zM42 581h1v1h-1zM44 581h1v1h-1zM46 581h1v1h-1zM48 581h1v1h-1zM50 581h1v1h-1zM52 581h1v1h-1zM54 581h1v1h-1zM56 581h1v1h-1zM58 581h1v1h-1zM60 581h1v1h-1zM62 581h1v1h-1zM64 581h1v1h-1zM66 581h1v1h-1zM68 581h1v1h-1zM70 581h1v1h-1zM72 581h1v1h-1zM74 581h1v1h-1zM76 581h1v1h-1zM78 581h1v1h-1zM80 581h1v1h-1zM82 581h1v1h-1zM84 581h1v1h-1zM86 581h1v1h-1zM88 581h1v1h-1zM90 581h1v1h-1zM92 581h1v1h-1zM94 581h1v1h-1zM96 581h1v1h-1zM98 581h1v1h-1zM100 581h1v1h-1zM102 581h1v1h-1zM104 581h1v1h-1zM106 581h1v1h-1zM108 581h1v1h-1zM110 581h1v1h-1zM112 581h1v1h-1zM114 581h1v1h-1zM116 581h1v1h-1zM118 581h1v1h-1zM120 581h1v1h-1zM122 581h1v1h-1zM124 581h1v1h-1zM126 581h1v1h-1zM128 581h1v1h-1zM130 581h1v1h-1zM132 581h1v1h-1zM134 581h1v1h-1zM136 581h1v1h-1zM138 581h1v1h-1zM140 581h1v1h-1zM142 581h1v1h-1zM144 581h1v1h-1zM146 581h1v1h-1zM148 581h1v1h-1zM150 581h1v1h-1zM152 581h1v1h-1zM154 581h1v1h-1zM156 581h1v1h-1zM158 581h1v1h-1zM160 581h1v1h-1zM162 581h1v1h-1zM164 581h1v1h-1zM166 581h1v1h-1zM168 581h1v1h-1zM170 581h1v1h-1zM172 581h1v1h-1zM174 581h1v1h-1zM176 581h1v1h-1zM178 581h1v1h-1zM180 581h1v1h-1zM182 581h1v1h-1zM184 581h1v1h-1zM186 581h1v1h-1zM188 581h1v1h-1zM190 581h1v1h-1zM192 581h1v1h-1zM194 581h1v1h-1zM196 581h1v1h-1zM198 581h1v1h-1zM200 581h1v1h-1zM202 581h1v1h-1zM204 581h1v1h-1zM206 581h1v1h-1zM208 581h1v1h-1zM210 581h1v1h-1zM212 581h1v1h-1zM214 581h1v1h-1zM216 581h1v1h-1zM218 581h1v1h-1zM220 581h1v1h-1zM222 581h1v1h-1zM224 581h1v1h-1zM226 581h1v1h-1zM228 581h1v1h-1zM230 581h1v1h-1zM232 581h1v1h-1zM234 581h1v1h-1zM236 581h1v1h-1zM238 581h1v1h-1zM240 581h1v1h-1zM242 581h1v1h-1zM244 581h1v1h-1zM246 581h1v1h-1zM248 581h1v1h-1zM250 581h1v1h-1zM252 581h1v1h-1zM254 581h1v1h-1zM256 581h1v1h-1zM258 581h1v1h-1zM260 581h1v1h-1zM262 581h1v1h-1zM264 581h1v1h-1zM266 581h1v1h-1zM268 581h1v1h-1zM270 581h1v1h-1zM272 581h1v1h-1zM274 581h1v1h-1zM276 581h1v1h-1zM278 581h1v1h-1zM280 581h1v1h-1zM282 581h1v1h-1zM284 581h1v1h-1zM286 581h1v1h-1zM288 581h1v1h-1zM290 581h1v1h-1zM292 581h1v1h-1zM294 581h1v1h-1zM296 581h1v1h-1zM298 581h1v1h-1zM300 581h1v1h-1zM302 581h1v1h-1zM304 581h1v1h-1zM306 581h1v1h-1zM308 581h1v1h-1zM310 581h1v1h-1zM312 581h1v1h-1zM314 581h1v1h-1zM316 581h1v1h-1zM318 581h1v1h-1zM320 581h1v1h-1zM322 581h1v1h-1zM324 581h1v1h-1zM326 581h1v1h-1zM328 581h1v1h-1zM330 581h1v1h-1zM332 581h1v1h-1zM334 581h1v1h-1zM336 581h1v1h-1zM338 581h1v1h-1zM340 581h1v1h-1zM342 581h1v1h-1zM344 581h1v1h-1zM346 581h1v1h-1zM348 581h1v1h-1zM350 581h1v1h-1zM352 581h1v1h-1zM354 581h1v1h-1zM356 581h1v1h-1zM358 581h1v1h-1zM360 581h1v1h-1zM362 581h1v1h-1zM364 581h1v1h-1zM366 581h1v1h-1zM368 581h1v1h-1zM370 581h1v1h-1zM372 581h1v1h-1zM374 581h1v1h-1zM376 581h1v1h-1zM378 581h1v1h-1zM380 581h1v1h-1zM382 581h1v1h-1zM384 581h1v1h-1zM386 581h1v1h-1zM388 581h1v1h-1zM390 581h1v1h-1zM392 581h1v1h-1zM394 581h1v1h-1zM396 581h1v1h-1zM398 581h1v1h-1zM400 581h1v1h-1zM402 581h1v1h-1zM404 581h1v1h-1zM406 581h1v1h-1zM408 581h1v1h-1zM410 581h1v1h-1zM412 581h1v1h-1zM414 581h1v1h-1zM416 581h1v1h-1zM418 581h1v1h-1zM420 581h1v1h-1zM422 581h1v1h-1zM424 581h1v1h-1zM426 581h1v1h-1zM428 581h1v1h-1zM430 581h1v1h-1zM432 581h1v1h-1zM434 581h1v1h-1zM436 581h1v1h-1zM438 581h1v1h-1zM440 581h1v1h-1zM442 581h1v1h-1zM444 581h1v1h-1zM446 581h1v1h-1zM448 581h1v1h-1zM450 581h1v1h-1zM452 581h1v1h-1zM454 581h1v1h-1zM456 581h1v1h-1zM458 581h1v1h-1zM460 581h1v1h-1zM462 581h1v1h-1zM464 581h1v1h-1zM466 581h1v1h-1zM468 581h1v1h-1zM470 581h1v1h-1zM472 581h1v1h-1zM474 581h1v1h-1zM476 581h1v1h-1zM478 581h1v1h-1zM480 581h1v1h-1zM482 581h1v1h-1zM484 581h1v1h-1zM486 581h1v1h-1zM488 581h1v1h-1zM490 581h1v1h-1zM492 581h1v1h-1zM494 581h1v1h-1z" fill="#e2e2e2"/>
<rect x="495" y="296" width="1" height="290" fill="#777"/>
<rect x="5" y="585" width="538" height="1" fill="#777"/>
<rect x="496" y="321" width="3" height="1" fill="#777"/>
<rect x="496" y="338" width="2" height="1" fill="#777"/>
<rect x="496" y="354" width="3" height="1" fill="#777"/>
<rect x="496" y="371" width="2" height="1" fill="#777"/>
<rect x="496" y="386" width="3" height="1" fill="#777"/>
<rect x="496" y="403" width="2" height="1" fill="#777"/>
<rect x="496" y="419" width="3" height="1" fill="#777"/>
<rect x="496" y="436" width="2" height="1" fill="#777"/>
<rect x="496" y="451" width="3" height="1" fill="#777"/>
<rect x="496" y="468" width="2" height="1" fill="#777"/>
<rect x="496" y="484" width="3" height="1" fill="#777"/>
<rect x="496" y="501" width="2" height="1" fill="#777"/>
<rect x="496" y="516" width="3" height="1" fill="#777"/>
<rect x="496" y="533" width="2" height="1" fill="#777"/>
<rect x="496" y="549" width="3" height="1" fill="#777"/>
<rect x="496" y="566" width="2" height="1" fill="#777"/>
<rect x="496" y="581" width="3" height="1" fill="#777"/>
<g fill="#000"><use href="#g0033" x="507" y="315"/><use href="#g002c" x="513" y="315"/><use href="#g0031" x="517" y="315"/><use href="#g0035" x="523" y="315"/><use href="#g0030" x="529" y="315"/></g>
<g fill="#000"><use href="#g0033" x="507" y="348"/><use href="#g002c" x="513" y="348"/><use href="#g0031" x="517" y="348"/><use href="#g0030" x="523" y="348"/><use href="#g0030" x="529" y="348"/></g>
<g fill="#000"><use href="#g0033" x="507" y="380"/><use href="#g002c" x="513" y="380"/><use href="#g0030" x="517" y="380"/><use href="#g0035" x="523" y="380"/><use href="#g0030" x="529" y="380"/></g>
<g fill="#000"><use href="#g0033" x="507" y="413"/><use href="#g002c" x="513" y="413"/><use href="#g0030" x="517" y="413"/><use href="#g0030" x="523" y="413"/><use href="#g0030" x="529" y="413"/></g>
<g fill="#000"><use href="#g0032" x="507" y="445"/><use href="#g002c" x="513" y="445"/><use href="#g0039" x="517" y="445"/><use href="#g0035" x="523" y="445"/><use href="#g0030" x="529" y="445"/></g>
<g fill="#000"><use href="#g0032" x="507" y="478"/><use href="#g002c" x="513" y="478"/><use href="#g0039" x="517" y="478"/><use href="#g0030" x="523" y="478"/><use href="#g0030" x="529" y="478"/></g>
<g fill="#000"><use href="#g0032" x="507" y="510"/><use href="#g002c" x="513" y="510"/><use href="#g0038" x="517" y="510"/><use href="#g0035" x="523" y="510"/><use href="#g0030" x="529" y="510"/></g>
<g fill="#000"><use href="#g0032" x="507" y="543"/><use href="#g002c" x="513" y="543"/><use href="#g0038" x="517" y="543"/><use href="#g0030" x="523" y="543"/><use href="#g0030" x="529" y="543"/></g>
<rect x="39" y="586" width="1" height="3" fill="#777"/>
<rect x="71" y="586" width="1" height="3" fill="#777"/>
<rect x="119" y="586" width="1" height="3" fill="#777"/>
<rect x="207" y="586" width="1" height="3" fill="#777"/>
<rect x="239" y="586" width="1" height="3" fill="#777"/>
<rect x="287" y="586" width="1" height="3" fill="#777"/>
<rect x="351" y="586" width="1" height="3" fill="#777"/>
<rect x="383" y="586" width="1" height="3" fill="#777"/>
<rect x="431" y="586" width="1" height="3" fill="#777"/>
<g fill="#000"><use href="#g0030" x="41" y="589"/><use href="#g0038" x="47" y="589"/></g>
<g fill="#000"><use href="#g0030" x="73" y="589"/><use href="#g0038" x="79" y="589"/><use href="#g002f" x="85" y="589"/><use href="#g0030" x="91" y="589"/><use href="#g0037" x="97" y="589"/></g>
<g fill="#000"><use href="#g0030" x="121" y="589"/><use href="#g0038" x="127" y="589"/><use href="#g002f" x="133" y="589"/><use href="#g0031" x="139" y="589"/><use href="#g0036" x="145" y="589"/></g>
<g fill="#000"><use href="#g0030" x="209" y="589"/><use href="#g0039" x="215" y="589"/></g>
<g fill="#000"><use href="#g0030" x="241" y="589"/><use href="#g0039" x="247" y="589"/><use href="#g002f" x="253" y="589"/><use href="#g0030" x="259" y="589"/><use href="#g0036" x="265" y="589"/></g>
<g fill="#000"><use href="#g0030" x="289" y="589"/><use href="#g0039" x="295" y="589"/><use href="#g002f" x="301" y="589"/><use href="#g0031" x="307" y="589"/><use href="#g0039" x="313" y="589"/></g>
<g fill="#000"><use href="#g0031" x="352" y="589"/><use href="#g0030" x="358" y="589"/></g>
<g fill="#000"><use href="#g0031" x="385" y="589"/><use href="#g0030" x="391" y="589"/><use href="#g002f" x="397" y="589"/><use href="#g0031" x="403" y="589"/><use href="#g0030" x="409" y="589"/></g>
<g fill="#000"><use href="#g0031" x="433" y="589"/><use href="#g0030" x="439" y="589"/><use href="#g002f" x="445" y="589"/><use href="#g0031" x="451" y="589"/><use href="#g0038" x="457" y="589"/></g>
<g fill="#000"><use href="#g0031" x="491" y="589"/><use href="#g0030" x="497" y="589"/><use href="#g002f" x="503" y="589"/><use href="#g0032" x="509" y="589"/><use href="#g0039" x="515" y="589"/></g>
<polyline points="15.5,433.5 23.5,424.5 31.5,416.5 39.5,435.5 47.5,461.5 55.5,545.5 63.5,461.5 71.5,465.5 79.5,477.5 87.5,457.5 95.5,454.5 103.5,471.5 111.5,490.5 119.5,466.5 127.5,466.5 135.5,455.5 143.5,458.5 151.5,479.5 159.5,471.5 167.5,481.5 175.5,458.5 183.5,471.5 191.5,459.5 199.5,449.5 207.5,427.5 215.5,430.5 223.5,465.5 231.5,480.5 239.5,495.5 247.5,486.5 255.5,499.5 263.5,536.5 271.5,506.5 279.5,534.5 287.5,521.5 295.5,524.5 303.5,507.5 311.5,514.5 319.5,540.5 327.5,544.5 335.5,532.5 343.5,542.5 351.5,562.5 359.5,533.5 367.5,445.5 375.5,463.5 383.5,443.5 391.5,453.5 399.5,457.5 407.5,480.5 415.5,496.5 423.5,486.5 431.5,479.5 439.5,483.5 447.5,456.5 455.5,460.5 463.5,490.5 471.5,496.5 479.5,464.5" fill="none" stroke="#e00000" stroke-width="1"/>
<polyline points="15.5,425.5 23.5,415.5 31.5,404.5 39.5,431.5 47.5,460.5 55.5,539.5 63.5,450.5 71.5,451.5 79.5,461.5 87.5,446.5 95.5,450.5 103.5,465.5 111.5,481.5 119.5,461.5 127.5,455.5 135.5,445.5 143.5,445.5 151.5,462.5 159.5,449.5 167.5,466.5 175.5,423.5 183.5,434.5 191.5,419.5 199.5,412.5 207.5,388.5 215.5,386.5 223.5,421.5 231.5,437.5 239.5,462.5 247.5,443.5 255.5,485.5 263.5,513.5 271.5,486.5 279.5,528.5 287.5,505.5 295.5,505.5 303.5,481.5 311.5,482.5 319.5,501.5 327.5,500.5 335.5,491.5 343.5,492.5 351.5,520.5 359.5,486.5 367.5,407.5 375.5,420.5 383.5,410.5 391.5,420.5 399.5,421.5 407.5,441.5 415.5,468.5 423.5,454.5 431.5,438.5 439.5,443.5 447.5,410.5 455.5,412.5 463.5,447.5 471.5,457.5 479.5,415.5" fill="none" stroke="#ff00ff" stroke-width="1"/>
<polyline points="15.5,389.5 23.5,385.5 31.5,377.5 39.5,412.5 47.5,433.5 55.5,498.5 63.5,423.5 71.5,418.5 79.5,421.5 87.5,411.5 95.5,419.5 103.5,437.5 111.5,454.5 119.5,436.5 127.5,428.5 135.5,419.5 143.5,421.5 151.5,432.5 159.5,416.5 167.5,436.5 175.5,371.5 183.5,384.5 191.5,370.5 199.5,362.5 207.5,340.5 215.5,341.5 223.5,383.5 231.5,400.5 239.5,425.5 247.5,398.5 255.5,415.5 263.5,456.5 271.5,438.5 279.5,466.5 287.5,431.5 295.5,425.5 303.5,404.5 311.5,402.5 319.5,421.5 327.5,418.5 335.5,419.5 343.5,423.5 351.5,463.5 359.5,408.5 367.5,353.5 375.5,369.5 383.5,362.5 391.5,363.5 399.5,362.5 407.5,386.5 415.5,414.5 423.5,401.5 431.5,372.5 439.5,384.5 447.5,334.5 455.5,336.5 463.5,371.5 471.5,384.5 479.5,344.5" fill="none" stroke="#000080" stroke-width="1"/>
<g fill="#e00000"><use href="#gad6d" x="9" y="300"/><use href="#gace0" x="21" y="300"/><use href="#g0033" x="33" y="300"/><use href="#g0059" x="39" y="300"/></g>
<g fill="#ff00ff"><use href="#gad6d" x="51" y="300"/><use href="#gace0" x="63" y="300"/><use href="#g0035" x="75" y="300"/><use href="#g0059" x="81" y="300"/></g>
<g fill="#000080"><use href="#gad6d" x="93" y="300"/><use href="#gace0" x="105" y="300"/><use href="#g0031" x="117" y="300"/><use href="#g0030" x="123" y="300"/><use href="#g0059" x="129" y="300"/></g>
<rect x="550" y="295" width="429" height="309" fill="#657891"/>
<rect x="551" y="296" width="428" height="307" fill="#fff"/>
<rect x="551" y="296" width="428" height="25" fill="#286bb0"/>
<rect x="551" y="321" width="85" height="282" fill="#d5e0ec"/>
<rect x="636" y="296" width="1" height="25" fill="#4a80bf"/>
<rect x="636" y="321" width="1" height="282" fill="#a9bfcf"/>
<rect x="721" y="296" width="1" height="25" fill="#4a80bf"/>
<rect x="721" y="321" width="1" height="282" fill="#a9bfcf"/>
<rect x="806" y="296" width="1" height="25" fill="#4a80bf"/>
<rect x="806" y="321" width="1" height="282" fill="#a9bfcf"/>
<rect x="890" y="296" width="1" height="25" fill="#4a80bf"/>
<rect x="890" y="321" width="1" height="282" fill="#a9bfcf"/>
<rect x="974" y="296" width="1" height="307" fill="#7d90a8"/>
<rect x="975" y="296" width="4" height="307" fill="#fff"/>
<rect x="976" y="296" width="3" height="14" fill="#c3cfdd"/>
<rect x="976" y="311" width="3" height="44" fill="#c3cfdd"/>
<rect x="976" y="589" width="3" height="13" fill="#c3cfdd"/>
<rect x="551" y="345" width="423" height="1" fill="#a9bfcf"/>
<rect x="551" y="370" width="423" height="1" fill="#a9bfcf"/>
<rect x="551" y="396" width="423" height="1" fill="#a9bfcf"/>
<rect x="551" y="421" width="423" height="1" fill="#a9bfcf"/>
<rect x="551" y="447" width="423" height="1" fill="#a9bfcf"/>
<rect x="551" y="472" width="423" height="1" fill="#a9bfcf"/>
<rect x="551" y="498" width="423" height="1" fill="#a9bfcf"/>
<rect x="551" y="524" width="423" height="1" fill="#a9bfcf"/>
<rect x="551" y="549" width="423" height="1" fill="#a9bfcf"/>
<rect x="551" y="575" width="423" height="1" fill="#a9bfcf"/>
<rect x="551" y="600" width="423" height="1" fill="#a9bfcf"/>
<g fill="#fff"><use href="#gad6d" x="565" y="302"/><use href="#gace0" x="577" y="302"/><use href="#g0031" x="589" y="302"/><use href="#g0030" x="595" y="302"/><use href="#g0059" x="601" y="302"/></g>
<path d="M636 313v5h-5z" fill="#fff" transform="translate(-1 0)"/>
<g fill="#fff"><use href="#g0031" x="656" y="303"/><use href="#g0031" x="662" y="303"/><use href="#gc2dc" x="668" y="303"/><use href="#g0033" x="680" y="303"/><use href="#g0030" x="686" y="303"/><use href="#gbd84" x="692" y="303"/></g>
<g fill="#fff"><use href="#g0031" x="741" y="303"/><use href="#g0036" x="747" y="303"/><use href="#gc2dc" x="753" y="303"/><use href="#g0030" x="765" y="303"/><use href="#g0030" x="771" y="303"/><use href="#gbd84" x="777" y="303"/></g>
<g fill="#fff"><use href="#gc804" x="837" y="303"/><use href="#gae30" x="849" y="303"/></g>
<g fill="#fff"><use href="#gc804" x="909" y="303"/><use href="#gae30" x="921" y="303"/><use href="#gb300" x="933" y="303"/><use href="#gbe44" x="945" y="303"/></g>
<g fill="#000"><use href="#g0032" x="570" y="327"/><use href="#g0034" x="576" y="327"/><use href="#g002f" x="582" y="327"/><use href="#g0031" x="588" y="327"/><use href="#g0030" x="594" y="327"/><use href="#g002f" x="600" y="327"/><use href="#g0032" x="606" y="327"/><use href="#g0038" x="612" y="327"/></g>
<g fill="#000"><use href="#g0033" x="686" y="327"/><use href="#g002c" x="692" y="327"/><use href="#g0031" x="696" y="327"/><use href="#g0031" x="702" y="327"/><use href="#g0032" x="708" y="327"/></g>
<g fill="#000"><use href="#g0033" x="771" y="327"/><use href="#g002c" x="777" y="327"/><use href="#g0031" x="781" y="327"/><use href="#g0031" x="787" y="327"/><use href="#g0037" x="793" y="327"/></g>
<g fill="#000"><use href="#g0033" x="855" y="327"/><use href="#g002c" x="861" y="327"/><use href="#g0030" x="865" y="327"/><use href="#g0035" x="871" y="327"/><use href="#g0034" x="877" y="327"/></g>
<g fill="#e00000"><use href="#g0030" x="943" y="327"/><use href="#g002c" x="949" y="327"/><use href="#g0030" x="953" y="327"/><use href="#g0036" x="959" y="327"/><use href="#g0033" x="965" y="327"/></g>
<g fill="#000"><use href="#g0032" x="570" y="352"/><use href="#g0034" x="576" y="352"/><use href="#g002f" x="582" y="352"/><use href="#g0031" x="588" y="352"/><use href="#g0030" x="594" y="352"/><use href="#g002f" x="600" y="352"/><use href="#g0032" x="606" y="352"/><use href="#g0035" x="612" y="352"/></g>
<g fill="#000"><use href="#g0033" x="686" y="352"/><use href="#g002c" x="692" y="352"/><use href="#g0030" x="696" y="352"/><use href="#g0036" x="702" y="352"/><use href="#g0033" x="708" y="352"/></g>
<g fill="#000"><use href="#g0033" x="771" y="352"/><use href="#g002c" x="777" y="352"/><use href="#g0030" x="781" y="352"/><use href="#g0035" x="787" y="352"/><use href="#g0034" x="793" y="352"/></g>
<g fill="#000"><use href="#g0033" x="855" y="352"/><use href="#g002c" x="861" y="352"/><use href="#g0030" x="865" y="352"/><use href="#g0037" x="871" y="352"/><use href="#g0034" x="877" y="352"/></g>
<g fill="#0000e0"><use href="#g002d" x="937" y="352"/><use href="#g0030" x="943" y="352"/><use href="#g002c" x="949" y="352"/><use href="#g0030" x="953" y="352"/><use href="#g0032" x="959" y="352"/><use href="#g0030" x="965" y="352"/></g>
<g fill="#000"><use href="#g0032" x="570" y="378"/><use href="#g0034" x="576" y="378"/><use href="#g002f" x="582" y="378"/><use href="#g0031" x="588" y="378"/><use href="#g0030" x="594" y="378"/><use href="#g002f" x="600" y="378"/><use href="#g0032" x="606" y="378"/><use href="#g0034" x="612" y="378"/></g>
<g fill="#000"><use href="#g0033" x="686" y="378"/><use href="#g002c" x="692" y="378"/><use href="#g0030" x="696" y="378"/><use href="#g0038" x="702" y="378"/><use href="#g0031" x="708" y="378"/></g>
<g fill="#000"><use href="#g0033" x="771" y="378"/><use href="#g002c" x="777" y="378"/><use href="#g0030" x="781" y="378"/><use href="#g0037" x="787" y="378"/><use href="#g0034" x="793" y="378"/></g>
<g fill="#000"><use href="#g0033" x="855" y="378"/><use href="#g002c" x="861" y="378"/><use href="#g0031" x="865" y="378"/><use href="#g0032" x="871" y="378"/><use href="#g0038" x="877" y="378"/></g>
<g fill="#0000e0"><use href="#g002d" x="937" y="378"/><use href="#g0030" x="943" y="378"/><use href="#g002c" x="949" y="378"/><use href="#g0030" x="953" y="378"/><use href="#g0035" x="959" y="378"/><use href="#g0034" x="965" y="378"/></g>
<g fill="#000"><use href="#g0032" x="570" y="403"/><use href="#g0034" x="576" y="403"/><use href="#g002f" x="582" y="403"/><use href="#g0031" x="588" y="403"/><use href="#g0030" x="594" y="403"/><use href="#g002f" x="600" y="403"/><use href="#g0032" x="606" y="403"/><use href="#g0033" x="612" y="403"/></g>
<g fill="#000"><use href="#g0033" x="686" y="403"/><use href="#g002c" x="692" y="403"/><use href="#g0031" x="696" y="403"/><use href="#g0034" x="702" y="403"/><use href="#g0034" x="708" y="403"/></g>
<g fill="#000"><use href="#g0033" x="771" y="403"/><use href="#g002c" x="777" y="403"/><use href="#g0031" x="781" y="403"/><use href="#g0032" x="787" y="403"/><use href="#g0038" x="793" y="403"/></g>
<g fill="#000"><use href="#g0033" x="855" y="403"/><use href="#g002c" x="861" y="403"/><use href="#g0031" x="865" y="403"/><use href="#g0033" x="871" y="403"/><use href="#g0030" x="877" y="403"/></g>
<g fill="#0000e0"><use href="#g002d" x="937" y="403"/><use href="#g0030" x="943" y="403"/><use href="#g002c" x="949" y="403"/><use href="#g0030" x="953" y="403"/><use href="#g0030" x="959" y="403"/><use href="#g0032" x="965" y="403"/></g>
<g fill="#000"><use href="#g0032" x="570" y="429"/><use href="#g0034" x="576" y="429"/><use href="#g002f" x="582" y="429"/><use href="#g0031" x="588" y="429"/><use href="#g0030" x="594" y="429"/><use href="#g002f" x="600" y="429"/><use href="#g0032" x="606" y="429"/><use href="#g0032" x="612" y="429"/></g>
<g fill="#000"><use href="#g0033" x="686" y="429"/><use href="#g002c" x="692" y="429"/><use href="#g0031" x="696" y="429"/><use href="#g0032" x="702" y="429"/><use href="#g0030" x="708" y="429"/></g>
<g fill="#000"><use href="#g0033" x="771" y="429"/><use href="#g002c" x="777" y="429"/><use href="#g0031" x="781" y="429"/><use href="#g0033" x="787" y="429"/><use href="#g0030" x="793" y="429"/></g>
<g fill="#000"><use href="#g0033" x="855" y="429"/><use href="#g002c" x="861" y="429"/><use href="#g0030" x="865" y="429"/><use href="#g0035" x="871" y="429"/><use href="#g0034" x="877" y="429"/></g>
<g fill="#e00000"><use href="#g0030" x="943" y="429"/><use href="#g002c" x="949" y="429"/><use href="#g0030" x="953" y="429"/><use href="#g0037" x="959" y="429"/><use href="#g0036" x="965" y="429"/></g>
<g fill="#000"><use href="#g0032" x="570" y="454"/><use href="#g0034" x="576" y="454"/><use href="#g002f" x="582" y="454"/><use href="#g0031" x="588" y="454"/><use href="#g0030" x="594" y="454"/><use href="#g002f" x="600" y="454"/><use href="#g0032" x="606" y="454"/><use href="#g0031" x="612" y="454"/></g>
<g fill="#000"><use href="#g0033" x="686" y="454"/><use href="#g002c" x="692" y="454"/><use href="#g0030" x="696" y="454"/><use href="#g0036" x="702" y="454"/><use href="#g0030" x="708" y="454"/></g>
<g fill="#000"><use href="#g0033" x="771" y="454"/><use href="#g002c" x="777" y="454"/><use href="#g0030" x="781" y="454"/><use href="#g0035" x="787" y="454"/><use href="#g0034" x="793" y="454"/></g>
<g fill="#000"><use href="#g0033" x="855" y="454"/><use href="#g002c" x="861" y="454"/><use href="#g0030" x="865" y="454"/><use href="#g0037" x="871" y="454"/><use href="#g0032" x="877" y="454"/></g>
<g fill="#0000e0"><use href="#g002d" x="937" y="454"/><use href="#g0030" x="943" y="454"/><use href="#g002c" x="949" y="454"/><use href="#g0030" x="953" y="454"/><use href="#g0031" x="959" y="454"/><use href="#g0038" x="965" y="454"/></g>
<g fill="#000"><use href="#g0032" x="570" y="480"/><use href="#g0034" x="576" y="480"/><use href="#g002f" x="582" y="480"/><use href="#g0031" x="588" y="480"/><use href="#g0030" x="594" y="480"/><use href="#g002f" x="600" y="480"/><use href="#g0031" x="606" y="480"/><use href="#g0038" x="612" y="480"/></g>
<g fill="#000"><use href="#g0033" x="686" y="480"/><use href="#g002c" x="692" y="480"/><use href="#g0030" x="696" y="480"/><use href="#g0035" x="702" y="480"/><use href="#g0034" x="708" y="480"/></g>
<g fill="#000"><use href="#g0033" x="771" y="480"/><use href="#g002c" x="777" y="480"/><use href="#g0030" x="781" y="480"/><use href="#g0037" x="787" y="480"/><use href="#g0032" x="793" y="480"/></g>
<g fill="#000"><use href="#g0033" x="855" y="480"/><use href="#g002c" x="861" y="480"/><use href="#g0030" x="865" y="480"/><use href="#g0032" x="871" y="480"/><use href="#g0038" x="877" y="480"/></g>
<g fill="#e00000"><use href="#g0030" x="943" y="480"/><use href="#g002c" x="949" y="480"/><use href="#g0030" x="953" y="480"/><use href="#g0034" x="959" y="480"/><use href="#g0034" x="965" y="480"/></g>
<g fill="#000"><use href="#g0032" x="570" y="506"/><use href="#g0034" x="576" y="506"/><use href="#g002f" x="582" y="506"/><use href="#g0031" x="588" y="506"/><use href="#g0030" x="594" y="506"/><use href="#g002f" x="600" y="506"/><use href="#g0031" x="606" y="506"/><use href="#g0037" x="612" y="506"/></g>
<g fill="#000"><use href="#g0033" x="686" y="506"/><use href="#g002c" x="692" y="506"/><use href="#g0030" x="696" y="506"/><use href="#g0031" x="702" y="506"/><use href="#g0032" x="708" y="506"/></g>
<g fill="#000"><use href="#g0033" x="771" y="506"/><use href="#g002c" x="777" y="506"/><use href="#g0030" x="781" y="506"/><use href="#g0032" x="787" y="506"/><use href="#g0038" x="793" y="506"/></g>
<g fill="#000"><use href="#g0033" x="855" y="506"/><use href="#g002c" x="861" y="506"/><use href="#g0030" x="865" y="506"/><use href="#g0030" x="871" y="506"/><use href="#g0038" x="877" y="506"/></g>
<g fill="#e00000"><use href="#g0030" x="943" y="506"/><use href="#g002c" x="949" y="506"/><use href="#g0030" x="953" y="506"/><use href="#g0032" x="959" y="506"/><use href="#g0030" x="965" y="506"/></g>
<g fill="#000"><use href="#g0032" x="570" y="531"/><use href="#g0034" x="576" y="531"/><use href="#g002f" x="582" y="531"/><use href="#g0031" x="588" y="531"/><use href="#g0030" x="594" y="531"/><use href="#g002f" x="600" y="531"/><use href="#g0031" x="606" y="531"/><use href="#g0036" x="612" y="531"/></g>
<g fill="#000"><use href="#g0033" x="686" y="531"/><use href="#g002c" x="692" y="531"/><use href="#g0030" x="696" y="531"/><use href="#g0031" x="702" y="531"/><use href="#g0032" x="708" y="531"/></g>
<g fill="#000"><use href="#g0033" x="771" y="531"/><use href="#g002c" x="777" y="531"/><use href="#g0030" x="781" y="531"/><use href="#g0030" x="787" y="531"/><use href="#g0038" x="793" y="531"/></g>
<g fill="#000"><use href="#g0033" x="855" y="531"/><use href="#g002c" x="861" y="531"/><use href="#g0030" x="865" y="531"/><use href="#g0035" x="871" y="531"/><use href="#g0030" x="877" y="531"/></g>
<g fill="#0000e0"><use href="#g002d" x="937" y="531"/><use href="#g0030" x="943" y="531"/><use href="#g002c" x="949" y="531"/><use href="#g0030" x="953" y="531"/><use href="#g0034" x="959" y="531"/><use href="#g0032" x="965" y="531"/></g>
<g fill="#000"><use href="#g0032" x="570" y="557"/><use href="#g0034" x="576" y="557"/><use href="#g002f" x="582" y="557"/><use href="#g0031" x="588" y="557"/><use href="#g0030" x="594" y="557"/><use href="#g002f" x="600" y="557"/><use href="#g0031" x="606" y="557"/><use href="#g0035" x="612" y="557"/></g>
<g fill="#000"><use href="#g0033" x="686" y="557"/><use href="#g002c" x="692" y="557"/><use href="#g0030" x="696" y="557"/><use href="#g0036" x="702" y="557"/><use href="#g0030" x="708" y="557"/></g>
<g fill="#000"><use href="#g0033" x="771" y="557"/><use href="#g002c" x="777" y="557"/><use href="#g0030" x="781" y="557"/><use href="#g0035" x="787" y="557"/><use href="#g0030" x="793" y="557"/></g>
<g fill="#000"><use href="#g0033" x="855" y="557"/><use href="#g002c" x="861" y="557"/><use href="#g0030" x="865" y="557"/><use href="#g0038" x="871" y="557"/><use href="#g0037" x="877" y="557"/></g>
<g fill="#0000e0"><use href="#g002d" x="937" y="557"/><use href="#g0030" x="943" y="557"/><use href="#g002c" x="949" y="557"/><use href="#g0030" x="953" y="557"/><use href="#g0033" x="959" y="557"/><use href="#g0037" x="965" y="557"/></g>
<g fill="#000"><use href="#g0032" x="570" y="582"/><use href="#g0034" x="576" y="582"/><use href="#g002f" x="582" y="582"/><use href="#g0031" x="588" y="582"/><use href="#g0030" x="594" y="582"/><use href="#g002f" x="600" y="582"/><use href="#g0031" x="606" y="582"/><use href="#g0034" x="612" y="582"/></g>
<g fill="#000"><use href="#g0033" x="686" y="582"/><use href="#g002c" x="692" y="582"/><use href="#g0030" x="696" y="582"/><use href="#g0038" x="702" y="582"/><use href="#g0039" x="708" y="582"/></g>
<g fill="#000"><use href="#g0033" x="771" y="582"/><use href="#g002c" x="777" y="582"/><use href="#g0030" x="781" y="582"/><use href="#g0038" x="787" y="582"/><use href="#g0037" x="793" y="582"/></g>
<g fill="#000"><use href="#g0033" x="855" y="582"/><use href="#g002c" x="861" y="582"/><use href="#g0030" x="865" y="582"/><use href="#g0038" x="871" y="582"/><use href="#g0035" x="877" y="582"/></g>
<g fill="#e00000"><use href="#g0030" x="943" y="582"/><use href="#g002c" x="949" y="582"/><use href="#g0030" x="953" y="582"/><use href="#g0030" x="959" y="582"/><use href="#g0032" x="965" y="582"/></g></svg></body></html>
